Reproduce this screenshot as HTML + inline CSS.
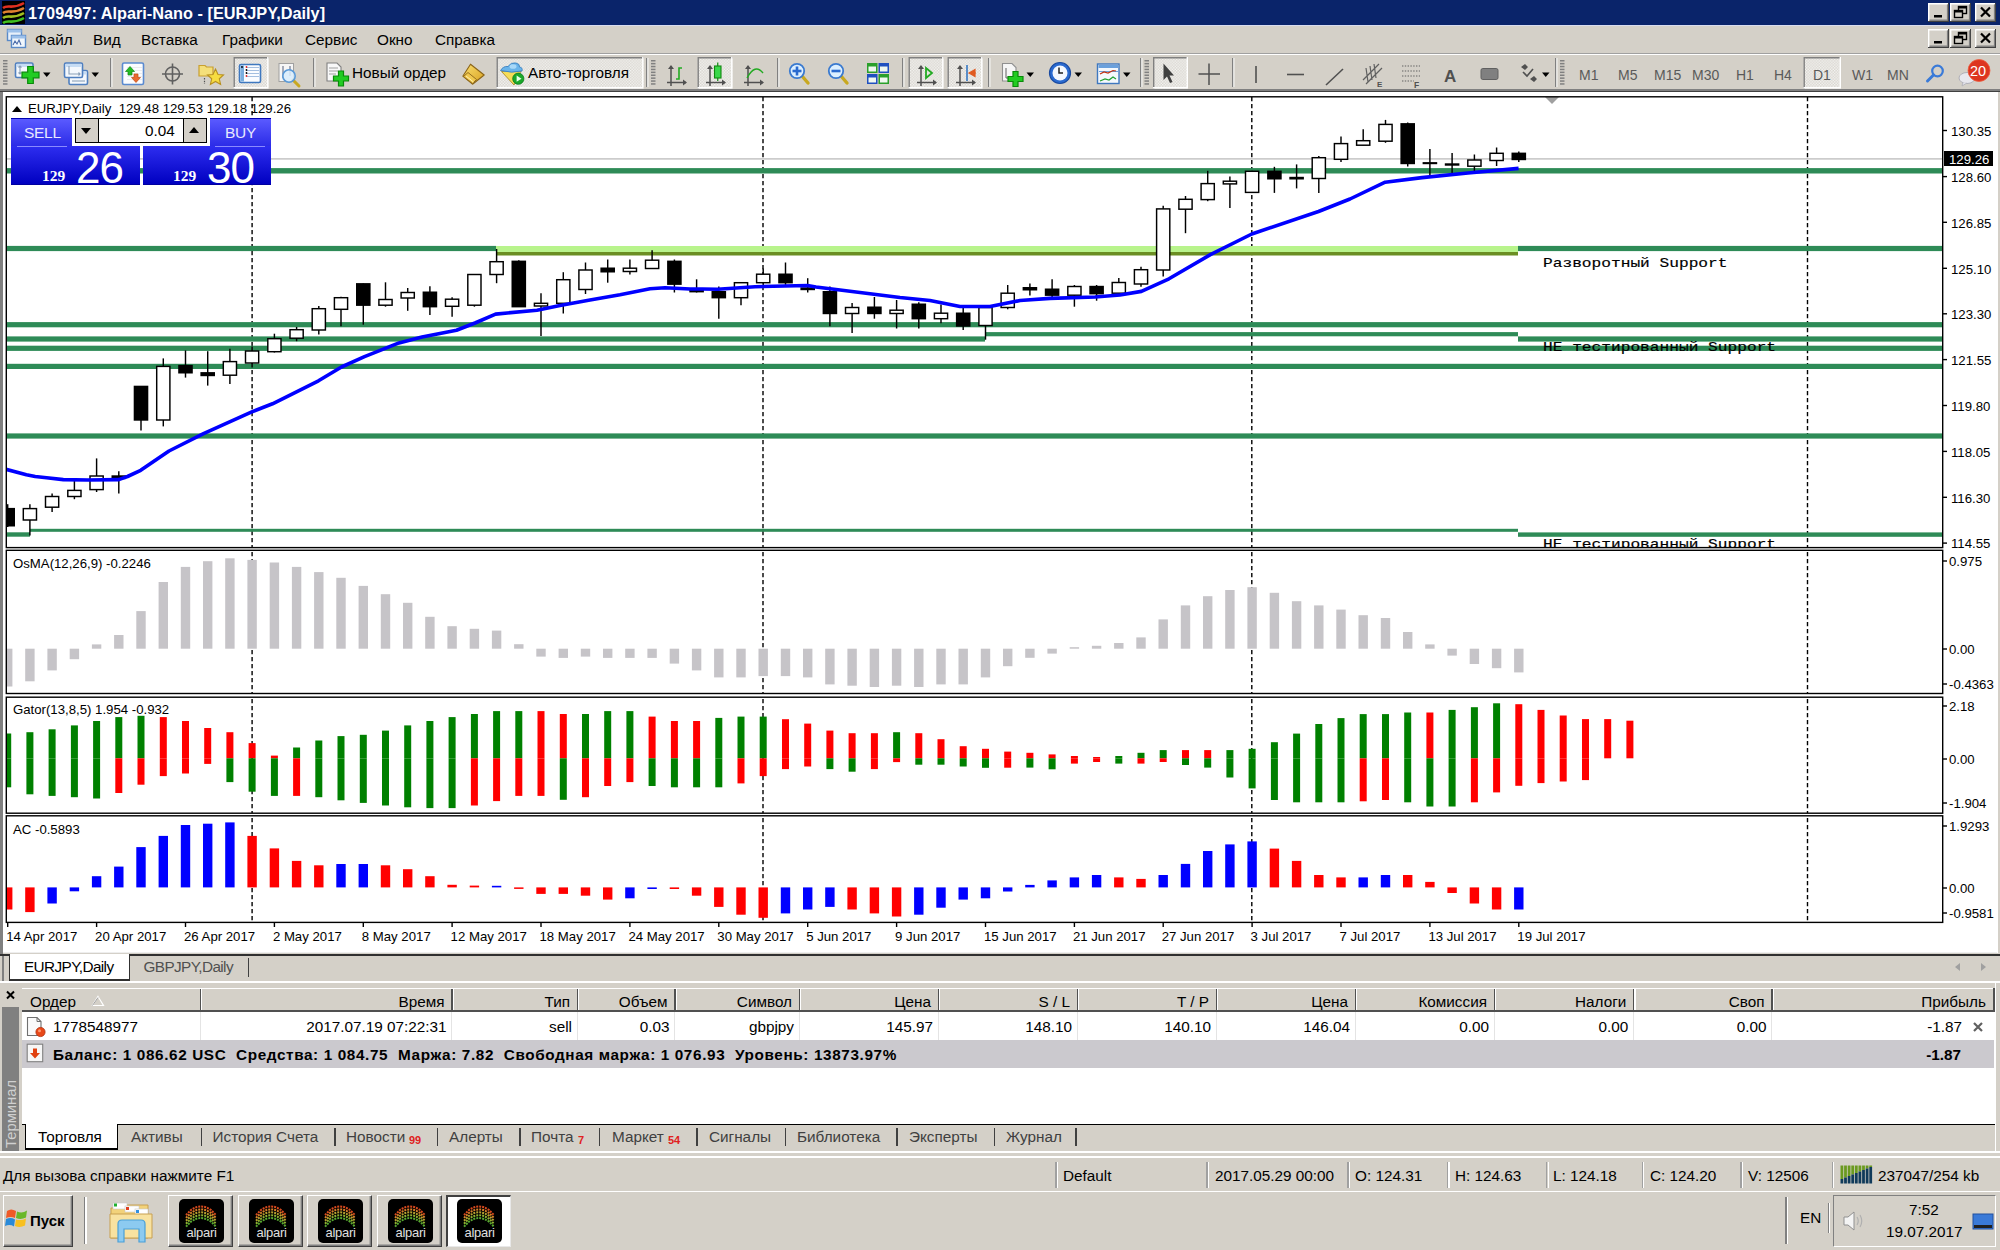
<!DOCTYPE html>
<html><head><meta charset="utf-8"><style>
*{box-sizing:border-box}
body{margin:0;width:2000px;height:1250px;overflow:hidden;background:#d4d0c8;font-family:"Liberation Sans", sans-serif;position:relative;color:#000}
.a{position:absolute}
.t{position:absolute;white-space:nowrap;font-size:15.3px;line-height:1}
svg text{font-family:"Liberation Sans", sans-serif}
svg text.mono{font-family:'Liberation Mono',monospace;font-size:16.2px;stroke:#000;stroke-width:0.2px}
</style></head><body>

<div class="a" style="left:0;top:0;width:2000px;height:25px;background:#0a246a"></div>
<svg class="a" style="left:2px;top:1px" width="23" height="23" viewBox="0 0 23 23">
<rect width="23" height="23" fill="#000"/>
<path d="M1 7 C6 3,10 9,22 2" stroke="#e03020" stroke-width="2.6" fill="none"/>
<path d="M1 12 C6 8,10 14,22 7" stroke="#e08030" stroke-width="2.6" fill="none"/>
<path d="M1 17 C6 13,10 19,22 12" stroke="#a0c020" stroke-width="2.6" fill="none"/>
<path d="M1 22 C6 18,10 24,22 17" stroke="#40c020" stroke-width="2.6" fill="none"/>
</svg>
<div class="t" style="left:28px;top:4.5px;color:#fff;font-weight:bold;font-size:16.3px">1709497: Alpari-Nano - [EURJPY,Daily]</div>
<svg class="a" style="left:1928px;top:3px" width="21" height="19" viewBox="0 0 21 19">
<rect x="0" y="0" width="21" height="19" fill="#d4d0c8"/>
<path d="M0 18.3 H20.3 V0" fill="none" stroke="#404040" stroke-width="1.4"/>
<path d="M0.7 18 V0.7 H20" fill="none" stroke="#fff" stroke-width="1.4"/>
<path d="M1.5 17 H19.5 V1.5" fill="none" stroke="#808080" stroke-width="1.2"/>
<rect x="6" y="12" width="8" height="2.5" fill="#000"/></svg><svg class="a" style="left:1950px;top:3px" width="21" height="19" viewBox="0 0 21 19">
<rect x="0" y="0" width="21" height="19" fill="#d4d0c8"/>
<path d="M0 18.3 H20.3 V0" fill="none" stroke="#404040" stroke-width="1.4"/>
<path d="M0.7 18 V0.7 H20" fill="none" stroke="#fff" stroke-width="1.4"/>
<path d="M1.5 17 H19.5 V1.5" fill="none" stroke="#808080" stroke-width="1.2"/>
<rect x="8.5" y="3.5" width="8" height="7" fill="none" stroke="#000" stroke-width="1.4"/><rect x="8.5" y="3.5" width="8" height="2" fill="#000"/><rect x="4.5" y="7.5" width="8" height="7" fill="#d4d0c8" stroke="#000" stroke-width="1.4"/><rect x="4.5" y="7.5" width="8" height="2" fill="#000"/></svg><svg class="a" style="left:1975px;top:3px" width="21" height="19" viewBox="0 0 21 19">
<rect x="0" y="0" width="21" height="19" fill="#d4d0c8"/>
<path d="M0 18.3 H20.3 V0" fill="none" stroke="#404040" stroke-width="1.4"/>
<path d="M0.7 18 V0.7 H20" fill="none" stroke="#fff" stroke-width="1.4"/>
<path d="M1.5 17 H19.5 V1.5" fill="none" stroke="#808080" stroke-width="1.2"/>
<path d="M6 4.5 L15 13.5 M15 4.5 L6 13.5" stroke="#000" stroke-width="2.2"/></svg>

<div class="a" style="left:0;top:25px;width:2000px;height:1.4px;background:#d8dcf0"></div>
<svg class="a" style="left:6px;top:28px" width="22" height="22" viewBox="0 0 22 22">
<rect x="1.5" y="1.5" width="14" height="11" fill="#e8f0fa" stroke="#5a8ac8" stroke-width="1.4"/>
<rect x="1.5" y="1.5" width="14" height="3" fill="#9cc0ea"/>
<rect x="5.5" y="7.5" width="14" height="12" fill="#f0f6fc" stroke="#5a8ac8" stroke-width="1.4"/>
<rect x="5.5" y="7.5" width="14" height="3" fill="#9cc0ea"/>
<path d="M7 17 L9 13 L11 16 L13 12 L15 17" stroke="#4a6aa8" stroke-width="1.1" fill="none"/>
</svg>
<div class="t" style="left:35px;top:31.5px;font-size:15.3px">Файл</div>
<div class="t" style="left:93px;top:31.5px;font-size:15.3px">Вид</div>
<div class="t" style="left:141px;top:31.5px;font-size:15.3px">Вставка</div>
<div class="t" style="left:222px;top:31.5px;font-size:15.3px">Графики</div>
<div class="t" style="left:305px;top:31.5px;font-size:15.3px">Сервис</div>
<div class="t" style="left:377px;top:31.5px;font-size:15.3px">Окно</div>
<div class="t" style="left:435px;top:31.5px;font-size:15.3px">Справка</div>
<svg class="a" style="left:1928px;top:29px" width="21" height="19" viewBox="0 0 21 19">
<rect x="0" y="0" width="21" height="19" fill="#d4d0c8"/>
<path d="M0 18.3 H20.3 V0" fill="none" stroke="#404040" stroke-width="1.4"/>
<path d="M0.7 18 V0.7 H20" fill="none" stroke="#fff" stroke-width="1.4"/>
<path d="M1.5 17 H19.5 V1.5" fill="none" stroke="#808080" stroke-width="1.2"/>
<rect x="6" y="12" width="8" height="2.5" fill="#000"/></svg><svg class="a" style="left:1950px;top:29px" width="21" height="19" viewBox="0 0 21 19">
<rect x="0" y="0" width="21" height="19" fill="#d4d0c8"/>
<path d="M0 18.3 H20.3 V0" fill="none" stroke="#404040" stroke-width="1.4"/>
<path d="M0.7 18 V0.7 H20" fill="none" stroke="#fff" stroke-width="1.4"/>
<path d="M1.5 17 H19.5 V1.5" fill="none" stroke="#808080" stroke-width="1.2"/>
<rect x="8.5" y="3.5" width="8" height="7" fill="none" stroke="#000" stroke-width="1.4"/><rect x="8.5" y="3.5" width="8" height="2" fill="#000"/><rect x="4.5" y="7.5" width="8" height="7" fill="#d4d0c8" stroke="#000" stroke-width="1.4"/><rect x="4.5" y="7.5" width="8" height="2" fill="#000"/></svg><svg class="a" style="left:1975px;top:29px" width="21" height="19" viewBox="0 0 21 19">
<rect x="0" y="0" width="21" height="19" fill="#d4d0c8"/>
<path d="M0 18.3 H20.3 V0" fill="none" stroke="#404040" stroke-width="1.4"/>
<path d="M0.7 18 V0.7 H20" fill="none" stroke="#fff" stroke-width="1.4"/>
<path d="M1.5 17 H19.5 V1.5" fill="none" stroke="#808080" stroke-width="1.2"/>
<path d="M6 4.5 L15 13.5 M15 4.5 L6 13.5" stroke="#000" stroke-width="2.2"/></svg><div class="a" style="left:0;top:52.5px;width:2000px;height:1.4px;background:#a0a0a0"></div><div class="a" style="left:0;top:53.9px;width:2000px;height:1.6px;background:#fff"></div>
<svg class="a" style="left:0;top:0" width="2000" height="92" viewBox="0 0 2000 92">
<defs><pattern id="chk" width="2.8" height="2.8" patternUnits="userSpaceOnUse"><rect width="2.8" height="2.8" fill="#d8d5ce"/><rect width="1.4" height="1.4" fill="#f4f4f2"/><rect x="1.4" y="1.4" width="1.4" height="1.4" fill="#f4f4f2"/></pattern></defs>
<rect x="3" y="60.0" width="4.5" height="1.5" fill="#808080"/><rect x="3" y="62.9" width="4.5" height="1.5" fill="#808080"/><rect x="3" y="65.8" width="4.5" height="1.5" fill="#808080"/><rect x="3" y="68.7" width="4.5" height="1.5" fill="#808080"/><rect x="3" y="71.6" width="4.5" height="1.5" fill="#808080"/><rect x="3" y="74.5" width="4.5" height="1.5" fill="#808080"/><rect x="3" y="77.4" width="4.5" height="1.5" fill="#808080"/><rect x="3" y="80.3" width="4.5" height="1.5" fill="#808080"/><rect x="3" y="83.2" width="4.5" height="1.5" fill="#808080"/>
<rect x="15.5" y="63" width="17.5" height="14.5" rx="1.5" fill="#f4f8fd" stroke="#4f7fbf" stroke-width="1.6"/><rect x="16.5" y="64" width="15.5" height="3" fill="#c6dcf4"/>
<path d="M20 66 V74 M18.5 67.5 L20 66 L21.5 67.5 M18.5 72.5 L20 74 L21.5 72.5" stroke="#8aa0b8" stroke-width="1.1" fill="none"/>
<path d="M27.7 66.5 H33.3 V72.2 H39.0 V77.8 H33.3 V83.5 H27.7 V77.8 H22.0 V72.2 H27.7 Z" fill="#22cc22" stroke="#0a8a0a" stroke-width="1.2"/>
<polygon points="43,72.5 50.5,72.5 46.75,77.0" fill="#000"/>
<rect x="69" y="70.5" width="18.5" height="14" rx="1.5" fill="#f4f8fd" stroke="#4f7fbf" stroke-width="1.6"/><rect x="70" y="71.5" width="16.5" height="3" fill="#c6dcf4"/>
<rect x="64.5" y="63" width="18" height="14.5" rx="1.5" fill="#f4f8fd" stroke="#4f7fbf" stroke-width="1.6"/><rect x="65.5" y="64" width="16" height="3" fill="#c6dcf4"/>
<path d="M69 66 V74 H80 M78.5 72.5 L80 74 L78.5 75.5" stroke="#8aa0b8" stroke-width="1.1" fill="none"/>
<path d="M72 81 H85" stroke="#8aa0b8" stroke-width="1.1"/>
<polygon points="91.5,72.5 99.0,72.5 95.25,77.0" fill="#000"/>
<rect x="110" y="58" width="1.4" height="29" fill="#808080"/><rect x="111.4" y="58" width="1" height="29" fill="#fff"/>
<rect x="122.5" y="63" width="21" height="21.5" rx="1.5" fill="#fbfcfe" stroke="#5a8ad0" stroke-width="1.6"/>
<path d="M127 67.5 H142 M127 70.5 H142 M127 73.5 H142 M127 76.5 H142 M127 79.5 H142" stroke="#e6e6ea" stroke-width="0.8"/>
<path d="M130 66.5 L125.5 71.5 H128 V75 H132 V71.5 H134.5 Z" fill="#22bb22" stroke="#118811" stroke-width="0.7"/>
<path d="M136 82.5 L131.5 77.5 H134 V74 H138 V77.5 H140.5 Z" fill="#e86a30" stroke="#c04a10" stroke-width="0.7"/>
<circle cx="172.5" cy="74" r="7" fill="none" stroke="#606060" stroke-width="1.6"/><path d="M172.5 63.5 V84.5 M162 74 H183" stroke="#606060" stroke-width="1.6"/>
<path d="M199 65.5 H205 L206.5 67 H213 V76 H199 Z" fill="#f4df7a" stroke="#c8a030" stroke-width="1.2"/>
<path d="M215.5 69 L218 74.5 L223.5 75 L219.3 78.8 L220.6 84.5 L215.5 81.5 L210.4 84.5 L211.7 78.8 L207.5 75 L213 74.5 Z" fill="#f6dc40" stroke="#b89020" stroke-width="1.1"/>
<path d="M204.5 78 V84" stroke="#505050" stroke-width="1.2" stroke-dasharray="1.4,1.4"/>
<rect x="233.5" y="57" width="35.0" height="31.5" fill="url(#chk)"/>
<path d="M234.2 88.5 V57.7 H268.5" stroke="#808080" stroke-width="1.4" fill="none"/>
<path d="M233.5 87.8 H267.8 V57" stroke="#fff" stroke-width="1.4" fill="none"/>
<rect x="239.5" y="64.5" width="21" height="18" rx="1.5" fill="#fafcff" stroke="#3f78bf" stroke-width="1.6"/><rect x="240.5" y="65.5" width="3.5" height="16" fill="#7aaede"/>
<path d="M247 67.5 H259 M247 70.5 H259 M247 73.5 H259 M247 76.5 H259" stroke="#9ab8dc" stroke-width="0.9"/>
<circle cx="246.5" cy="67" r="0.9" fill="#e02020"/><circle cx="246.5" cy="70" r="0.9" fill="#000"/><circle cx="246.5" cy="73" r="0.9" fill="#000"/><circle cx="246.5" cy="76" r="0.9" fill="#e02020"/><circle cx="242" cy="67" r="0.9" fill="#000"/>
<rect x="279" y="63.5" width="14.5" height="18" fill="#f6f6f6" stroke="#a0a0a0" stroke-width="1"/>
<path d="M283 66 V78 M290 66 V76" stroke="#707890" stroke-width="1.2"/>
<path d="M293 80 L299 86" stroke="#c8a820" stroke-width="3" stroke-linecap="round"/><circle cx="289" cy="76" r="6.2" fill="#d8ecfb" fill-opacity="0.85" stroke="#5a9ad8" stroke-width="1.6"/>
<rect x="313" y="58" width="1.4" height="29" fill="#808080"/><rect x="314.4" y="58" width="1" height="29" fill="#fff"/>
<path d="M327 63 H337 L341 67 V81 H327 Z" fill="#f8f8f8" stroke="#808080" stroke-width="1.1"/><path d="M329 68 H338 M329 71 H338 M329 74 H336" stroke="#a0a0a0" stroke-width="1"/>
<path d="M338.5 71.0 H343.5 V76.0 H348.5 V81.0 H343.5 V86.0 H338.5 V81.0 H333.5 V76.0 H338.5 Z" fill="#22cc22" stroke="#0a8a0a" stroke-width="1.2"/>
<defs><linearGradient id="gold" x1="0" y1="0" x2="1" y2="1"><stop offset="0" stop-color="#fbe070"/><stop offset="1" stop-color="#d8a020"/></linearGradient></defs>
<path d="M470.5 64.2 L484.2 75 L472.5 84.2 L462.8 76.2 Z" fill="url(#gold)" stroke="#8a6418" stroke-width="1.1" stroke-linejoin="round"/>
<path d="M463.5 76.5 L468 72.5 L476.5 79.5 L472.5 83.5 Z" fill="#f0c850" stroke="#8a6418" stroke-width="0.9"/><path d="M466 76 L473.5 82" stroke="#fff0b0" stroke-width="1"/>
<rect x="496.5" y="57" width="147.0" height="31.5" fill="url(#chk)"/>
<path d="M497.2 88.5 V57.7 H643.5" stroke="#808080" stroke-width="1.4" fill="none"/>
<path d="M496.5 87.8 H642.8 V57" stroke="#fff" stroke-width="1.4" fill="none"/>
<path d="M501.5 71.5 L521 71 L514 85 Z" fill="#f4dc58" stroke="#a88a28" stroke-width="0.9" stroke-linejoin="round"/>
<path d="M500.5 70.5 Q503 66 508 66.5 Q511 62 516 63 Q520 64 519.5 67 Q523 67.5 522 71 Q512 73.5 500.5 70.5 Z" fill="#6ab4ea" stroke="#3a80c0" stroke-width="0.9"/><ellipse cx="513" cy="66.5" rx="3.5" ry="2.3" fill="#a8d8f8"/>
<circle cx="518.3" cy="78.7" r="5.6" fill="#1aa82a" stroke="#0a7a1a" stroke-width="0.8"/><path d="M516.6 75.6 L521.5 78.7 L516.6 81.8 Z" fill="#e8ffe8"/>
<rect x="646" y="58" width="1.4" height="29" fill="#808080"/><rect x="647.4" y="58" width="1" height="29" fill="#fff"/>
<rect x="651" y="60.0" width="4.5" height="1.5" fill="#808080"/><rect x="651" y="62.9" width="4.5" height="1.5" fill="#808080"/><rect x="651" y="65.8" width="4.5" height="1.5" fill="#808080"/><rect x="651" y="68.7" width="4.5" height="1.5" fill="#808080"/><rect x="651" y="71.6" width="4.5" height="1.5" fill="#808080"/><rect x="651" y="74.5" width="4.5" height="1.5" fill="#808080"/><rect x="651" y="77.4" width="4.5" height="1.5" fill="#808080"/><rect x="651" y="80.3" width="4.5" height="1.5" fill="#808080"/><rect x="651" y="83.2" width="4.5" height="1.5" fill="#808080"/>
<path d="M671 86 V66" stroke="#505050" stroke-width="1.5"/>
<path d="M668 69 L671 65 L674 69" fill="#505050"/>
<path d="M667 82.5 H686" stroke="#505050" stroke-width="1.5"/>
<path d="M683 79.5 L687 82.5 L683 85.5" fill="#505050"/>
<path d="M676 79 H679 V68 H682" stroke="#22aa22" stroke-width="1.6" fill="none"/>
<rect x="697.5" y="57" width="35.0" height="31.5" fill="url(#chk)"/>
<path d="M698.2 88.5 V57.7 H732.5" stroke="#808080" stroke-width="1.4" fill="none"/>
<path d="M697.5 87.8 H731.8 V57" stroke="#fff" stroke-width="1.4" fill="none"/>
<path d="M710 86 V66" stroke="#505050" stroke-width="1.5"/>
<path d="M707 69 L710 65 L713 69" fill="#505050"/>
<path d="M706 82.5 H725" stroke="#505050" stroke-width="1.5"/>
<path d="M722 79.5 L726 82.5 L722 85.5" fill="#505050"/>
<rect x="714.5" y="66" width="6.5" height="12" fill="#3ad84a" stroke="#118811" stroke-width="1.1"/><path d="M717.75 62.5 V66 M717.75 78 V81" stroke="#118811" stroke-width="1.2"/>
<path d="M748 86 V66" stroke="#505050" stroke-width="1.5"/>
<path d="M745 69 L748 65 L751 69" fill="#505050"/>
<path d="M744 82.5 H763" stroke="#505050" stroke-width="1.5"/>
<path d="M760 79.5 L764 82.5 L760 85.5" fill="#505050"/>
<path d="M747 78 Q755 63 763 73" stroke="#22aa22" stroke-width="1.4" fill="none"/>
<rect x="777" y="58" width="1.4" height="29" fill="#808080"/><rect x="778.4" y="58" width="1" height="29" fill="#fff"/>
<path d="M802 76 L808 83" stroke="#c8a820" stroke-width="3.4" stroke-linecap="round"/>
<circle cx="797" cy="71" r="7.2" fill="#dcefff" stroke="#3a7ad0" stroke-width="1.8"/><rect x="792.5" y="69.7" width="9" height="2.6" fill="#2a6acf"/><rect x="795.7" y="66.5" width="2.6" height="9" fill="#2a6acf"/>
<path d="M841 76 L847 83" stroke="#c8a820" stroke-width="3.4" stroke-linecap="round"/>
<circle cx="836" cy="71" r="7.2" fill="#dcefff" stroke="#3a7ad0" stroke-width="1.8"/><rect x="831.5" y="69.7" width="9" height="2.6" fill="#2a6acf"/>
<rect x="867" y="63" width="10.5" height="10" fill="#2aa02a"/><rect x="868.5" y="66.5" width="7.5" height="5" fill="#f0f8f0"/>
<rect x="878.5" y="63" width="10.5" height="10" fill="#2050c0"/><rect x="880.0" y="66.5" width="7.5" height="5" fill="#f0f8f0"/>
<rect x="867" y="74" width="10.5" height="10" fill="#2050c0"/><rect x="868.5" y="77.5" width="7.5" height="5" fill="#f0f8f0"/>
<rect x="878.5" y="74" width="10.5" height="10" fill="#2aa02a"/><rect x="880.0" y="77.5" width="7.5" height="5" fill="#f0f8f0"/>
<rect x="902" y="58" width="1.4" height="29" fill="#808080"/><rect x="903.4" y="58" width="1" height="29" fill="#fff"/>
<rect x="908.5" y="57" width="35.0" height="31.5" fill="url(#chk)"/>
<path d="M909.2 88.5 V57.7 H943.5" stroke="#808080" stroke-width="1.4" fill="none"/>
<path d="M908.5 87.8 H942.8 V57" stroke="#fff" stroke-width="1.4" fill="none"/>
<path d="M921 86 V66" stroke="#505050" stroke-width="1.5"/>
<path d="M918 69 L921 65 L924 69" fill="#505050"/>
<path d="M917 82.5 H936" stroke="#505050" stroke-width="1.5"/>
<path d="M933 79.5 L937 82.5 L933 85.5" fill="#505050"/>
<path d="M926 68 L932 73 L926 78 Z" fill="none" stroke="#22aa22" stroke-width="1.8"/>
<rect x="947.5" y="57" width="35.0" height="31.5" fill="url(#chk)"/>
<path d="M948.2 88.5 V57.7 H982.5" stroke="#808080" stroke-width="1.4" fill="none"/>
<path d="M947.5 87.8 H981.8 V57" stroke="#fff" stroke-width="1.4" fill="none"/>
<path d="M960 86 V66" stroke="#505050" stroke-width="1.5"/>
<path d="M957 69 L960 65 L963 69" fill="#505050"/>
<path d="M956 82.5 H975" stroke="#505050" stroke-width="1.5"/>
<path d="M972 79.5 L976 82.5 L972 85.5" fill="#505050"/>
<path d="M967 65 V81" stroke="#2a70c0" stroke-width="1.5"/><path d="M969 73 L975 69.5 V76.5 Z M973 73 H976" fill="#e05a20" stroke="#e05a20" stroke-width="1.2"/>
<rect x="988" y="58" width="1.4" height="29" fill="#808080"/><rect x="989.4" y="58" width="1" height="29" fill="#fff"/>
<path d="M1002.5 63.5 H1012 L1016 67.5 V81 H1002.5 Z" fill="#f6f6f6" stroke="#909090" stroke-width="1.1"/><path d="M1006 68 V78 H1012" stroke="#606060" stroke-width="1" fill="none"/>
<path d="M1013.0 71.5 H1018.0 V76.5 H1023.0 V81.5 H1018.0 V86.5 H1013.0 V81.5 H1008.0 V76.5 H1013.0 Z" fill="#22cc22" stroke="#0a8a0a" stroke-width="1.2"/>
<polygon points="1026.5,72.5 1034.0,72.5 1030.25,77.0" fill="#000"/>
<circle cx="1060" cy="73" r="10.5" fill="#2a6ad0" stroke="#1a4aa0" stroke-width="1.2"/><circle cx="1060" cy="73" r="7.5" fill="#f4f8ff"/><path d="M1059 67.5 V73 H1063" stroke="#202020" stroke-width="1.5" fill="none"/>
<polygon points="1074.5,72.5 1082.0,72.5 1078.25,77.0" fill="#000"/>
<rect x="1097.5" y="64" width="21.5" height="19.5" fill="#f4f8fd" stroke="#3f78bf" stroke-width="1.4"/><rect x="1098.5" y="65" width="19.5" height="3" fill="#6aa0dc"/><path d="M1099 71.5 H1118" stroke="#6aa0dc" stroke-width="1"/><path d="M1100 74 L1104 72 L1108 73 L1113 70.5 L1116 71" stroke="#c03010" stroke-width="1.2" fill="none"/><path d="M1100 81 L1105 79 L1109 80 L1113 77 L1116 79" stroke="#20a030" stroke-width="1.2" fill="none"/>
<polygon points="1123,72.5 1130.5,72.5 1126.75,77.0" fill="#000"/>
<rect x="1140" y="58" width="1.4" height="29" fill="#808080"/><rect x="1141.4" y="58" width="1" height="29" fill="#fff"/>
<rect x="1144.5" y="60.0" width="4.5" height="1.5" fill="#808080"/><rect x="1144.5" y="62.9" width="4.5" height="1.5" fill="#808080"/><rect x="1144.5" y="65.8" width="4.5" height="1.5" fill="#808080"/><rect x="1144.5" y="68.7" width="4.5" height="1.5" fill="#808080"/><rect x="1144.5" y="71.6" width="4.5" height="1.5" fill="#808080"/><rect x="1144.5" y="74.5" width="4.5" height="1.5" fill="#808080"/><rect x="1144.5" y="77.4" width="4.5" height="1.5" fill="#808080"/><rect x="1144.5" y="80.3" width="4.5" height="1.5" fill="#808080"/><rect x="1144.5" y="83.2" width="4.5" height="1.5" fill="#808080"/>
<rect x="1153" y="57" width="35" height="31.5" fill="url(#chk)"/>
<path d="M1153.7 88.5 V57.7 H1188" stroke="#808080" stroke-width="1.4" fill="none"/>
<path d="M1153 87.8 H1187.3 V57" stroke="#fff" stroke-width="1.4" fill="none"/>
<path d="M1163.5 63.5 V80 L1167 76.5 L1170 83 L1172.5 82 L1169.5 75.5 L1174 75.5 Z" fill="#404040"/>
<path d="M1209 63.5 V85 M1198.5 74 H1220" stroke="#505050" stroke-width="1.5"/>
<rect x="1232" y="58" width="1.4" height="29" fill="#808080"/><rect x="1233.4" y="58" width="1" height="29" fill="#fff"/>
<path d="M1256 66 V83" stroke="#505050" stroke-width="1.6"/>
<path d="M1287 74.5 H1304" stroke="#505050" stroke-width="1.6"/>
<path d="M1326 85 L1343 69" stroke="#505050" stroke-width="1.6"/>
<path d="M1363 80 L1379 64 M1366 84 L1382 68 M1366 68 L1368 82 M1370 66 L1372 80 M1374 64 L1376 78" stroke="#606060" stroke-width="1.2" fill="none"/><text x="1377" y="87" style="font-size:8px;font-weight:bold;font-family:'Liberation Sans'" fill="#505050">E</text>
<path d="M1402 66 H1420 M1402 71 H1420 M1402 76 H1420 M1402 81 H1414" stroke="#606060" stroke-width="1.2" stroke-dasharray="1.4,1.4"/><text x="1414" y="88" style="font-size:8.5px;font-weight:bold;font-family:'Liberation Sans'" fill="#505050">F</text>
<text x="1444" y="82" style="font-size:17px;font-weight:bold;font-family:'Liberation Sans'" fill="#505050">A</text>
<rect x="1481" y="68.5" width="17" height="11" rx="1.8" fill="#808080" stroke="#606060" stroke-width="1"/>
<path d="M1521 67 L1525 64 L1528 67 L1525 70 Z M1530 79 L1534 76 L1537 79 L1534 82 Z" fill="#505050"/><path d="M1523 72 L1527 76 L1533 69" stroke="#505050" stroke-width="1.6" fill="none"/>
<polygon points="1542,72.5 1549.5,72.5 1545.75,77.0" fill="#000"/>
<rect x="1555" y="58" width="1.4" height="29" fill="#808080"/><rect x="1556.4" y="58" width="1" height="29" fill="#fff"/>
<rect x="1560" y="60.0" width="4.5" height="1.5" fill="#808080"/><rect x="1560" y="62.9" width="4.5" height="1.5" fill="#808080"/><rect x="1560" y="65.8" width="4.5" height="1.5" fill="#808080"/><rect x="1560" y="68.7" width="4.5" height="1.5" fill="#808080"/><rect x="1560" y="71.6" width="4.5" height="1.5" fill="#808080"/><rect x="1560" y="74.5" width="4.5" height="1.5" fill="#808080"/><rect x="1560" y="77.4" width="4.5" height="1.5" fill="#808080"/><rect x="1560" y="80.3" width="4.5" height="1.5" fill="#808080"/><rect x="1560" y="83.2" width="4.5" height="1.5" fill="#808080"/>
<rect x="1803.5" y="57" width="37.5" height="31.5" fill="url(#chk)"/>
<path d="M1804.2 88.5 V57.7 H1841" stroke="#808080" stroke-width="1.4" fill="none"/>
<path d="M1803.5 87.8 H1840.3 V57" stroke="#fff" stroke-width="1.4" fill="none"/>
<text x="1579" y="79.5" style="font-size:14px;font-family:'Liberation Sans'" fill="#5a5a5a">M1</text>
<text x="1618" y="79.5" style="font-size:14px;font-family:'Liberation Sans'" fill="#5a5a5a">M5</text>
<text x="1654" y="79.5" style="font-size:14px;font-family:'Liberation Sans'" fill="#5a5a5a">M15</text>
<text x="1692" y="79.5" style="font-size:14px;font-family:'Liberation Sans'" fill="#5a5a5a">M30</text>
<text x="1736" y="79.5" style="font-size:14px;font-family:'Liberation Sans'" fill="#5a5a5a">H1</text>
<text x="1774" y="79.5" style="font-size:14px;font-family:'Liberation Sans'" fill="#5a5a5a">H4</text>
<text x="1813" y="79.5" style="font-size:14px;font-family:'Liberation Sans'" fill="#5a5a5a">D1</text>
<text x="1852" y="79.5" style="font-size:14px;font-family:'Liberation Sans'" fill="#5a5a5a">W1</text>
<text x="1887" y="79.5" style="font-size:14px;font-family:'Liberation Sans'" fill="#5a5a5a">MN</text>
<circle cx="1937.5" cy="71" r="5.3" fill="none" stroke="#3a7ad8" stroke-width="2.2"/><path d="M1933.5 75 L1927.5 81" stroke="#3a7ad8" stroke-width="3" stroke-linecap="round"/>
<ellipse cx="1967" cy="78" rx="8" ry="5.5" fill="#e8e8ee" stroke="#b0b0b8" stroke-width="1"/><path d="M1963 82 L1962 86 L1967 83" fill="#e0e0e8" stroke="#b0b0b8" stroke-width="0.8"/>
<circle cx="1979" cy="70.5" r="11" fill="#dd3520"/><circle cx="1979" cy="70.5" r="11" fill="none" stroke="#f06040" stroke-width="0.8"/><text x="1970" y="76" style="font-size:14.5px;font-family:'Liberation Sans'" fill="#fff">20</text>
</svg>
<div class="t" style="left:352px;top:64.5px;font-size:15.3px">Новый ордер</div>
<div class="t" style="left:528px;top:64.5px;font-size:15.3px">Авто-торговля</div>
<div class="a" style="left:0;top:89px;width:2000px;height:1.5px;background:#808080"></div>
<div class="a" style="left:0;top:90.5px;width:2000px;height:1.5px;background:#404040"></div>
<!-- chart window -->
<div class="a" style="left:0;top:92px;width:2.5px;height:862px;background:#808080"></div>
<div class="a" style="left:2.5px;top:92px;width:1995px;height:861px;background:#fff"></div>
<div class="a" style="left:1997.5px;top:92px;width:2.5px;height:862px;background:#d4d0c8"></div>
<svg class="a" style="left:0;top:0" width="2000" height="1250" viewBox="0 0 2000 1250">
<defs><clipPath id="cm"><rect x="6" y="97" width="1937" height="450"/></clipPath>
<clipPath id="co"><rect x="6" y="550" width="1937" height="143"/></clipPath>
<clipPath id="cg"><rect x="6" y="697" width="1937" height="116"/></clipPath>
<clipPath id="ca"><rect x="6" y="816" width="1937" height="106"/></clipPath></defs>
<g clip-path="url(#cm)"><line x1="252.1" y1="97" x2="252.1" y2="922" stroke="#000" stroke-width="1.4" stroke-dasharray="4.2,2.8"/>
<line x1="763.0" y1="97" x2="763.0" y2="922" stroke="#000" stroke-width="1.4" stroke-dasharray="4.2,2.8"/>
<line x1="1251.8" y1="97" x2="1251.8" y2="922" stroke="#000" stroke-width="1.4" stroke-dasharray="4.2,2.8"/>
<line x1="1807.5" y1="97" x2="1807.5" y2="922" stroke="#000" stroke-width="1.4" stroke-dasharray="4.2,2.8"/>
<rect x="6" y="158.2" width="1937" height="1.4" fill="#c0c0c0"/>
<rect x="6" y="168.1" width="1936" height="5.4" fill="#2e8b57"/>
<rect x="6" y="245.9" width="490" height="5.2" fill="#2e8b57"/>
<rect x="496" y="246" width="1022" height="6" fill="#b8f48c"/>
<rect x="496" y="252" width="1022" height="3.5" fill="#6b8e23"/>
<rect x="1518" y="245.9" width="424" height="5.2" fill="#2e8b57"/>
<rect x="6" y="322.1" width="1936" height="5.2" fill="#2e8b57"/>
<rect x="6" y="336.4" width="979" height="5.2" fill="#2e8b57"/>
<rect x="985" y="332.1" width="533" height="4.2" fill="#2e8b57"/>
<rect x="1518" y="336.4" width="424" height="5.2" fill="#2e8b57"/>
<rect x="6" y="345.7" width="1936" height="5.2" fill="#2e8b57"/>
<rect x="6" y="363.8" width="1936" height="5.2" fill="#2e8b57"/>
<rect x="6" y="433.4" width="1936" height="5.2" fill="#2e8b57"/>
<rect x="6" y="532.3" width="24" height="4.4" fill="#2e8b57"/>
<rect x="30" y="528.8" width="1488" height="3.0" fill="#2e8b57"/>
<rect x="1518" y="532.4" width="424" height="4.4" fill="#2e8b57"/>
<text transform="translate(1543,266.5) scale(1,0.82)" class="mono" fill="#000">Разворотный Support</text>
<text transform="translate(1543,351) scale(1,0.82)" class="mono" fill="#000">НЕ тестированный Support</text>
<text transform="translate(1543,547.5) scale(1,0.82)" class="mono" fill="#000">НЕ тестированный Support</text>
<line x1="7.7" y1="504.2" x2="7.7" y2="527.0" stroke="#000" stroke-width="1.45"/>
<rect x="0.4" y="507.9" width="14.6" height="18.6" fill="#000"/>
<line x1="29.9" y1="504.2" x2="29.9" y2="535.4" stroke="#000" stroke-width="1.45"/>
<rect x="23.3" y="508.6" width="13.2" height="11.4" fill="#fff" stroke="#000" stroke-width="1.45"/>
<line x1="52.1" y1="493.6" x2="52.1" y2="512.0" stroke="#000" stroke-width="1.45"/>
<rect x="45.5" y="496.5" width="13.2" height="10.7" fill="#fff" stroke="#000" stroke-width="1.45"/>
<line x1="74.4" y1="480.8" x2="74.4" y2="499.2" stroke="#000" stroke-width="1.45"/>
<rect x="67.8" y="490.4" width="13.2" height="6.1" fill="#fff" stroke="#000" stroke-width="1.45"/>
<line x1="96.6" y1="458.4" x2="96.6" y2="492.0" stroke="#000" stroke-width="1.45"/>
<rect x="90.0" y="476.0" width="13.2" height="13.6" fill="#fff" stroke="#000" stroke-width="1.45"/>
<line x1="118.8" y1="471.2" x2="118.8" y2="493.6" stroke="#000" stroke-width="1.45"/>
<rect x="111.5" y="475.3" width="14.6" height="3.8" fill="#000"/>
<line x1="141.0" y1="386.0" x2="141.0" y2="430.4" stroke="#000" stroke-width="1.45"/>
<rect x="133.7" y="385.7" width="14.6" height="35.0" fill="#000"/>
<line x1="163.3" y1="358.4" x2="163.3" y2="426.4" stroke="#000" stroke-width="1.45"/>
<rect x="156.7" y="366.4" width="13.2" height="53.6" fill="#fff" stroke="#000" stroke-width="1.45"/>
<line x1="185.5" y1="350.4" x2="185.5" y2="377.6" stroke="#000" stroke-width="1.45"/>
<rect x="178.2" y="364.9" width="14.6" height="8.6" fill="#000"/>
<line x1="207.7" y1="351.2" x2="207.7" y2="385.6" stroke="#000" stroke-width="1.45"/>
<rect x="200.4" y="372.1" width="14.6" height="4.1" fill="#000"/>
<line x1="229.9" y1="348.8" x2="229.9" y2="384.0" stroke="#000" stroke-width="1.45"/>
<rect x="223.3" y="361.6" width="13.2" height="13.6" fill="#fff" stroke="#000" stroke-width="1.45"/>
<line x1="252.1" y1="346.5" x2="252.1" y2="367.5" stroke="#000" stroke-width="1.45"/>
<rect x="245.5" y="351.0" width="13.2" height="12.0" fill="#fff" stroke="#000" stroke-width="1.45"/>
<line x1="274.4" y1="333.7" x2="274.4" y2="352.5" stroke="#000" stroke-width="1.45"/>
<rect x="267.8" y="338.7" width="13.2" height="13.0" fill="#fff" stroke="#000" stroke-width="1.45"/>
<line x1="296.6" y1="327.0" x2="296.6" y2="341.2" stroke="#000" stroke-width="1.45"/>
<rect x="290.0" y="329.7" width="13.2" height="8.5" fill="#fff" stroke="#000" stroke-width="1.45"/>
<line x1="318.8" y1="306.0" x2="318.8" y2="334.5" stroke="#000" stroke-width="1.45"/>
<rect x="312.2" y="308.7" width="13.2" height="21.3" fill="#fff" stroke="#000" stroke-width="1.45"/>
<line x1="341.0" y1="296.7" x2="341.0" y2="326.2" stroke="#000" stroke-width="1.45"/>
<rect x="334.4" y="297.7" width="13.2" height="11.6" fill="#fff" stroke="#000" stroke-width="1.45"/>
<line x1="363.3" y1="283.5" x2="363.3" y2="324.7" stroke="#000" stroke-width="1.45"/>
<rect x="356.0" y="283.1" width="14.6" height="22.8" fill="#000"/>
<line x1="385.5" y1="282.3" x2="385.5" y2="306.7" stroke="#000" stroke-width="1.45"/>
<rect x="378.9" y="299.5" width="13.2" height="5.7" fill="#fff" stroke="#000" stroke-width="1.45"/>
<line x1="407.7" y1="288.0" x2="407.7" y2="310.8" stroke="#000" stroke-width="1.45"/>
<rect x="401.1" y="292.5" width="13.2" height="5.5" fill="#fff" stroke="#000" stroke-width="1.45"/>
<line x1="429.9" y1="286.2" x2="429.9" y2="315.0" stroke="#000" stroke-width="1.45"/>
<rect x="422.6" y="291.5" width="14.6" height="15.9" fill="#000"/>
<line x1="452.1" y1="297.3" x2="452.1" y2="316.8" stroke="#000" stroke-width="1.45"/>
<rect x="445.5" y="299.2" width="13.2" height="7.1" fill="#fff" stroke="#000" stroke-width="1.45"/>
<line x1="474.4" y1="274.5" x2="474.4" y2="306.7" stroke="#000" stroke-width="1.45"/>
<rect x="467.8" y="274.5" width="13.2" height="30.7" fill="#fff" stroke="#000" stroke-width="1.45"/>
<line x1="496.6" y1="249.0" x2="496.6" y2="283.2" stroke="#000" stroke-width="1.45"/>
<rect x="490.0" y="261.7" width="13.2" height="12.8" fill="#fff" stroke="#000" stroke-width="1.45"/>
<line x1="518.8" y1="260.2" x2="518.8" y2="306.7" stroke="#000" stroke-width="1.45"/>
<rect x="511.5" y="260.6" width="14.6" height="46.8" fill="#000"/>
<line x1="541.0" y1="293.2" x2="541.0" y2="336.0" stroke="#000" stroke-width="1.45"/>
<rect x="534.4" y="303.3" width="13.2" height="2.7" fill="#fff" stroke="#000" stroke-width="1.45"/>
<line x1="563.3" y1="272.2" x2="563.3" y2="313.5" stroke="#000" stroke-width="1.45"/>
<rect x="556.7" y="279.7" width="13.2" height="23.6" fill="#fff" stroke="#000" stroke-width="1.45"/>
<line x1="585.5" y1="262.5" x2="585.5" y2="294.0" stroke="#000" stroke-width="1.45"/>
<rect x="578.9" y="270.0" width="13.2" height="19.5" fill="#fff" stroke="#000" stroke-width="1.45"/>
<line x1="607.7" y1="259.5" x2="607.7" y2="282.7" stroke="#000" stroke-width="1.45"/>
<rect x="600.4" y="267.5" width="14.6" height="5.0" fill="#000"/>
<line x1="629.9" y1="259.5" x2="629.9" y2="274.5" stroke="#000" stroke-width="1.45"/>
<rect x="623.3" y="268.2" width="13.2" height="3.3" fill="#fff" stroke="#000" stroke-width="1.45"/>
<line x1="652.1" y1="250.2" x2="652.1" y2="268.5" stroke="#000" stroke-width="1.45"/>
<rect x="645.5" y="260.2" width="13.2" height="8.3" fill="#fff" stroke="#000" stroke-width="1.45"/>
<line x1="674.4" y1="259.5" x2="674.4" y2="292.5" stroke="#000" stroke-width="1.45"/>
<rect x="667.1" y="260.6" width="14.6" height="24.3" fill="#000"/>
<line x1="696.6" y1="279.3" x2="696.6" y2="292.5" stroke="#000" stroke-width="1.45"/>
<rect x="689.3" y="289.5" width="14.6" height="2.9" fill="#000"/>
<line x1="718.8" y1="286.5" x2="718.8" y2="318.7" stroke="#000" stroke-width="1.45"/>
<rect x="711.5" y="291.0" width="14.6" height="7.4" fill="#000"/>
<line x1="741.0" y1="282.7" x2="741.0" y2="305.2" stroke="#000" stroke-width="1.45"/>
<rect x="734.4" y="282.7" width="13.2" height="15.0" fill="#fff" stroke="#000" stroke-width="1.45"/>
<line x1="763.2" y1="268.5" x2="763.2" y2="285.0" stroke="#000" stroke-width="1.45"/>
<rect x="756.6" y="274.2" width="13.2" height="8.5" fill="#fff" stroke="#000" stroke-width="1.45"/>
<line x1="785.5" y1="262.5" x2="785.5" y2="285.0" stroke="#000" stroke-width="1.45"/>
<rect x="778.2" y="273.5" width="14.6" height="9.9" fill="#000"/>
<line x1="807.7" y1="278.2" x2="807.7" y2="292.5" stroke="#000" stroke-width="1.45"/>
<rect x="800.4" y="287.3" width="14.6" height="2.9" fill="#000"/>
<line x1="829.9" y1="286.5" x2="829.9" y2="326.2" stroke="#000" stroke-width="1.45"/>
<rect x="822.6" y="291.0" width="14.6" height="23.2" fill="#000"/>
<line x1="852.1" y1="303.0" x2="852.1" y2="333.0" stroke="#000" stroke-width="1.45"/>
<rect x="845.5" y="307.5" width="13.2" height="6.0" fill="#fff" stroke="#000" stroke-width="1.45"/>
<line x1="874.4" y1="297.0" x2="874.4" y2="318.7" stroke="#000" stroke-width="1.45"/>
<rect x="867.1" y="306.5" width="14.6" height="7.7" fill="#000"/>
<line x1="896.6" y1="300.0" x2="896.6" y2="328.5" stroke="#000" stroke-width="1.45"/>
<rect x="890.0" y="310.2" width="13.2" height="3.3" fill="#fff" stroke="#000" stroke-width="1.45"/>
<line x1="918.8" y1="302.2" x2="918.8" y2="328.5" stroke="#000" stroke-width="1.45"/>
<rect x="911.5" y="303.5" width="14.6" height="15.9" fill="#000"/>
<line x1="941.0" y1="304.5" x2="941.0" y2="323.2" stroke="#000" stroke-width="1.45"/>
<rect x="934.4" y="313.2" width="13.2" height="5.5" fill="#fff" stroke="#000" stroke-width="1.45"/>
<line x1="963.2" y1="307.5" x2="963.2" y2="330.0" stroke="#000" stroke-width="1.45"/>
<rect x="955.9" y="312.5" width="14.6" height="14.2" fill="#000"/>
<line x1="985.5" y1="307.5" x2="985.5" y2="339.7" stroke="#000" stroke-width="1.45"/>
<rect x="978.9" y="307.5" width="13.2" height="18.0" fill="#fff" stroke="#000" stroke-width="1.45"/>
<line x1="1007.7" y1="285.0" x2="1007.7" y2="309.3" stroke="#000" stroke-width="1.45"/>
<rect x="1001.1" y="293.2" width="13.2" height="14.3" fill="#fff" stroke="#000" stroke-width="1.45"/>
<line x1="1029.9" y1="283.5" x2="1029.9" y2="295.5" stroke="#000" stroke-width="1.45"/>
<rect x="1022.6" y="287.0" width="14.6" height="3.5" fill="#000"/>
<line x1="1052.1" y1="279.3" x2="1052.1" y2="297.7" stroke="#000" stroke-width="1.45"/>
<rect x="1044.8" y="288.5" width="14.6" height="7.4" fill="#000"/>
<line x1="1074.4" y1="285.0" x2="1074.4" y2="306.7" stroke="#000" stroke-width="1.45"/>
<rect x="1067.8" y="286.5" width="13.2" height="8.7" fill="#fff" stroke="#000" stroke-width="1.45"/>
<line x1="1096.6" y1="285.0" x2="1096.6" y2="300.7" stroke="#000" stroke-width="1.45"/>
<rect x="1089.3" y="285.8" width="14.6" height="8.6" fill="#000"/>
<line x1="1118.8" y1="278.0" x2="1118.8" y2="293.2" stroke="#000" stroke-width="1.45"/>
<rect x="1112.2" y="282.5" width="13.2" height="10.7" fill="#fff" stroke="#000" stroke-width="1.45"/>
<line x1="1141.0" y1="266.8" x2="1141.0" y2="286.8" stroke="#000" stroke-width="1.45"/>
<rect x="1134.4" y="269.7" width="13.2" height="14.3" fill="#fff" stroke="#000" stroke-width="1.45"/>
<line x1="1163.2" y1="205.7" x2="1163.2" y2="276.4" stroke="#000" stroke-width="1.45"/>
<rect x="1156.6" y="208.9" width="13.2" height="61.1" fill="#fff" stroke="#000" stroke-width="1.45"/>
<line x1="1185.5" y1="196.0" x2="1185.5" y2="233.2" stroke="#000" stroke-width="1.45"/>
<rect x="1178.9" y="199.3" width="13.2" height="9.9" fill="#fff" stroke="#000" stroke-width="1.45"/>
<line x1="1207.7" y1="170.8" x2="1207.7" y2="201.2" stroke="#000" stroke-width="1.45"/>
<rect x="1201.1" y="183.6" width="13.2" height="16.0" fill="#fff" stroke="#000" stroke-width="1.45"/>
<line x1="1229.9" y1="176.4" x2="1229.9" y2="207.9" stroke="#000" stroke-width="1.45"/>
<rect x="1223.3" y="181.2" width="13.2" height="2.7" fill="#fff" stroke="#000" stroke-width="1.45"/>
<line x1="1252.1" y1="170.8" x2="1252.1" y2="192.4" stroke="#000" stroke-width="1.45"/>
<rect x="1245.5" y="171.3" width="13.2" height="21.1" fill="#fff" stroke="#000" stroke-width="1.45"/>
<line x1="1274.4" y1="166.8" x2="1274.4" y2="192.9" stroke="#000" stroke-width="1.45"/>
<rect x="1267.1" y="170.6" width="14.6" height="8.9" fill="#000"/>
<line x1="1296.6" y1="164.4" x2="1296.6" y2="188.4" stroke="#000" stroke-width="1.45"/>
<rect x="1289.3" y="176.8" width="14.6" height="2.7" fill="#000"/>
<line x1="1318.8" y1="156.0" x2="1318.8" y2="192.9" stroke="#000" stroke-width="1.45"/>
<rect x="1312.2" y="157.7" width="13.2" height="20.8" fill="#fff" stroke="#000" stroke-width="1.45"/>
<line x1="1341.0" y1="136.4" x2="1341.0" y2="162.0" stroke="#000" stroke-width="1.45"/>
<rect x="1334.4" y="143.6" width="13.2" height="15.7" fill="#fff" stroke="#000" stroke-width="1.45"/>
<line x1="1363.2" y1="129.2" x2="1363.2" y2="145.2" stroke="#000" stroke-width="1.45"/>
<rect x="1356.6" y="140.7" width="13.2" height="4.5" fill="#fff" stroke="#000" stroke-width="1.45"/>
<line x1="1385.5" y1="119.9" x2="1385.5" y2="142.8" stroke="#000" stroke-width="1.45"/>
<rect x="1378.9" y="124.4" width="13.2" height="16.8" fill="#fff" stroke="#000" stroke-width="1.45"/>
<line x1="1407.7" y1="122.5" x2="1407.7" y2="166.5" stroke="#000" stroke-width="1.45"/>
<rect x="1400.4" y="123.1" width="14.6" height="41.1" fill="#000"/>
<line x1="1429.9" y1="149.0" x2="1429.9" y2="176.0" stroke="#000" stroke-width="1.45"/>
<rect x="1422.6" y="162.1" width="14.6" height="2.1" fill="#000"/>
<line x1="1452.1" y1="153.0" x2="1452.1" y2="173.5" stroke="#000" stroke-width="1.45"/>
<rect x="1444.8" y="163.3" width="14.6" height="2.4" fill="#000"/>
<line x1="1474.4" y1="154.5" x2="1474.4" y2="171.5" stroke="#000" stroke-width="1.45"/>
<rect x="1467.8" y="160.0" width="13.2" height="6.2" fill="#fff" stroke="#000" stroke-width="1.45"/>
<line x1="1496.6" y1="147.5" x2="1496.6" y2="166.0" stroke="#000" stroke-width="1.45"/>
<rect x="1490.0" y="153.3" width="13.2" height="7.2" fill="#fff" stroke="#000" stroke-width="1.45"/>
<line x1="1518.8" y1="151.5" x2="1518.8" y2="162.0" stroke="#000" stroke-width="1.45"/>
<rect x="1511.5" y="152.6" width="14.6" height="7.6" fill="#000"/>
<polyline points="6,469.3 26.4,474.7 35.2,476.5 46.6,477.8 63.3,479.6 88,480 118.7,479.6 127.5,476.5 140.7,470.3 149.5,464.2 169,451 203.5,433.7 251.8,411.9 272.5,403.8 318.5,380.8 341.5,367 364.5,356.7 399,342.9 422,337.1 456.5,330.2 475,323 495.6,314.1 537,310.2 560,305.6 590,300 620,294.7 650,288.7 665,287.7 690,289 702.5,289 717.5,289.2 755,286.7 807.5,285.5 816,287 840,290 900,297.5 930,300.5 960,306.5 990,306.5 1020,300.5 1050,298.4 1095,297 1120,295 1141.4,291.4 1169,278.8 1210.4,254.6 1251.8,234 1318.5,211.5 1350,199 1385.2,182.2 1422,177.6 1468,173 1518.6,168.4" fill="none" stroke="#0000ff" stroke-width="3.6" stroke-linejoin="round"/>
<polygon points="1545,97 1559,97 1552,104" fill="#a0a0a0"/></g>
<g clip-path="url(#co)"><line x1="252.1" y1="97" x2="252.1" y2="922" stroke="#000" stroke-width="1.4" stroke-dasharray="4.2,2.8"/>
<line x1="763.0" y1="97" x2="763.0" y2="922" stroke="#000" stroke-width="1.4" stroke-dasharray="4.2,2.8"/>
<line x1="1251.8" y1="97" x2="1251.8" y2="922" stroke="#000" stroke-width="1.4" stroke-dasharray="4.2,2.8"/>
<line x1="1807.5" y1="97" x2="1807.5" y2="922" stroke="#000" stroke-width="1.4" stroke-dasharray="4.2,2.8"/>
<rect x="3.0" y="648.7" width="9.4" height="37.8" fill="#c6c4c8"/>
<rect x="25.2" y="648.7" width="9.4" height="32.6" fill="#c6c4c8"/>
<rect x="47.4" y="648.7" width="9.4" height="21.7" fill="#c6c4c8"/>
<rect x="69.7" y="648.7" width="9.4" height="10.5" fill="#c6c4c8"/>
<rect x="91.9" y="644.4" width="9.4" height="4.3" fill="#c6c4c8"/>
<rect x="114.1" y="635.0" width="9.4" height="13.7" fill="#c6c4c8"/>
<rect x="136.3" y="611.1" width="9.4" height="37.6" fill="#c6c4c8"/>
<rect x="158.6" y="582.0" width="9.4" height="66.7" fill="#c6c4c8"/>
<rect x="180.8" y="566.9" width="9.4" height="81.8" fill="#c6c4c8"/>
<rect x="203.0" y="561.2" width="9.4" height="87.5" fill="#c6c4c8"/>
<rect x="225.2" y="558.3" width="9.4" height="90.4" fill="#c6c4c8"/>
<rect x="247.4" y="559.9" width="9.4" height="88.8" fill="#c6c4c8"/>
<rect x="269.7" y="562.5" width="9.4" height="86.2" fill="#c6c4c8"/>
<rect x="291.9" y="566.9" width="9.4" height="81.8" fill="#c6c4c8"/>
<rect x="314.1" y="572.1" width="9.4" height="76.6" fill="#c6c4c8"/>
<rect x="336.3" y="577.8" width="9.4" height="70.9" fill="#c6c4c8"/>
<rect x="358.6" y="585.9" width="9.4" height="62.8" fill="#c6c4c8"/>
<rect x="380.8" y="594.2" width="9.4" height="54.5" fill="#c6c4c8"/>
<rect x="403.0" y="602.8" width="9.4" height="45.9" fill="#c6c4c8"/>
<rect x="425.2" y="616.8" width="9.4" height="31.9" fill="#c6c4c8"/>
<rect x="447.4" y="626.2" width="9.4" height="22.5" fill="#c6c4c8"/>
<rect x="469.7" y="628.8" width="9.4" height="19.9" fill="#c6c4c8"/>
<rect x="491.9" y="630.6" width="9.4" height="18.1" fill="#c6c4c8"/>
<rect x="514.1" y="644.2" width="9.4" height="4.5" fill="#c6c4c8"/>
<rect x="536.3" y="648.7" width="9.4" height="7.9" fill="#c6c4c8"/>
<rect x="558.6" y="648.7" width="9.4" height="9.2" fill="#c6c4c8"/>
<rect x="580.8" y="648.7" width="9.4" height="7.9" fill="#c6c4c8"/>
<rect x="603.0" y="648.7" width="9.4" height="9.2" fill="#c6c4c8"/>
<rect x="625.2" y="648.7" width="9.4" height="9.2" fill="#c6c4c8"/>
<rect x="647.4" y="648.7" width="9.4" height="9.2" fill="#c6c4c8"/>
<rect x="669.7" y="648.7" width="9.4" height="14.9" fill="#c6c4c8"/>
<rect x="691.9" y="648.7" width="9.4" height="21.7" fill="#c6c4c8"/>
<rect x="714.1" y="648.7" width="9.4" height="28.7" fill="#c6c4c8"/>
<rect x="736.3" y="648.7" width="9.4" height="28.7" fill="#c6c4c8"/>
<rect x="758.5" y="648.7" width="9.4" height="27.4" fill="#c6c4c8"/>
<rect x="780.8" y="648.7" width="9.4" height="27.4" fill="#c6c4c8"/>
<rect x="803.0" y="648.7" width="9.4" height="28.7" fill="#c6c4c8"/>
<rect x="825.2" y="648.7" width="9.4" height="35.7" fill="#c6c4c8"/>
<rect x="847.4" y="648.7" width="9.4" height="37.0" fill="#c6c4c8"/>
<rect x="869.7" y="648.7" width="9.4" height="38.3" fill="#c6c4c8"/>
<rect x="891.9" y="648.7" width="9.4" height="37.0" fill="#c6c4c8"/>
<rect x="914.1" y="648.7" width="9.4" height="38.3" fill="#c6c4c8"/>
<rect x="936.3" y="648.7" width="9.4" height="35.7" fill="#c6c4c8"/>
<rect x="958.5" y="648.7" width="9.4" height="35.7" fill="#c6c4c8"/>
<rect x="980.8" y="648.7" width="9.4" height="28.7" fill="#c6c4c8"/>
<rect x="1003.0" y="648.7" width="9.4" height="17.5" fill="#c6c4c8"/>
<rect x="1025.2" y="648.7" width="9.4" height="9.1" fill="#c6c4c8"/>
<rect x="1047.4" y="648.7" width="9.4" height="4.9" fill="#c6c4c8"/>
<rect x="1069.7" y="647.2" width="9.4" height="1.5" fill="#c6c4c8"/>
<rect x="1091.9" y="645.8" width="9.4" height="2.9" fill="#c6c4c8"/>
<rect x="1114.1" y="643.0" width="9.4" height="5.7" fill="#c6c4c8"/>
<rect x="1136.3" y="637.4" width="9.4" height="11.3" fill="#c6c4c8"/>
<rect x="1158.5" y="619.4" width="9.4" height="29.3" fill="#c6c4c8"/>
<rect x="1180.8" y="605.4" width="9.4" height="43.3" fill="#c6c4c8"/>
<rect x="1203.0" y="596.2" width="9.4" height="52.5" fill="#c6c4c8"/>
<rect x="1225.2" y="590.0" width="9.4" height="58.7" fill="#c6c4c8"/>
<rect x="1247.4" y="587.2" width="9.4" height="61.5" fill="#c6c4c8"/>
<rect x="1269.7" y="592.8" width="9.4" height="55.9" fill="#c6c4c8"/>
<rect x="1291.9" y="601.2" width="9.4" height="47.5" fill="#c6c4c8"/>
<rect x="1314.1" y="605.4" width="9.4" height="43.3" fill="#c6c4c8"/>
<rect x="1336.3" y="609.6" width="9.4" height="39.1" fill="#c6c4c8"/>
<rect x="1358.5" y="615.2" width="9.4" height="33.5" fill="#c6c4c8"/>
<rect x="1380.8" y="618.0" width="9.4" height="30.7" fill="#c6c4c8"/>
<rect x="1403.0" y="632.0" width="9.4" height="16.7" fill="#c6c4c8"/>
<rect x="1425.2" y="644.4" width="9.4" height="4.3" fill="#c6c4c8"/>
<rect x="1447.4" y="648.7" width="9.4" height="6.9" fill="#c6c4c8"/>
<rect x="1469.7" y="648.7" width="9.4" height="15.3" fill="#c6c4c8"/>
<rect x="1491.9" y="648.7" width="9.4" height="19.5" fill="#c6c4c8"/>
<rect x="1514.1" y="648.7" width="9.4" height="23.7" fill="#c6c4c8"/></g>
<g clip-path="url(#cg)"><line x1="252.1" y1="97" x2="252.1" y2="922" stroke="#000" stroke-width="1.4" stroke-dasharray="4.2,2.8"/>
<line x1="763.0" y1="97" x2="763.0" y2="922" stroke="#000" stroke-width="1.4" stroke-dasharray="4.2,2.8"/>
<line x1="1251.8" y1="97" x2="1251.8" y2="922" stroke="#000" stroke-width="1.4" stroke-dasharray="4.2,2.8"/>
<line x1="1807.5" y1="97" x2="1807.5" y2="922" stroke="#000" stroke-width="1.4" stroke-dasharray="4.2,2.8"/>
<rect x="4.2" y="733.5" width="7" height="24.8" fill="#008000"/>
<rect x="4.2" y="758.3" width="7" height="29.0" fill="#008000"/>
<rect x="26.4" y="732.2" width="7" height="26.1" fill="#008000"/>
<rect x="26.4" y="758.3" width="7" height="36.0" fill="#008000"/>
<rect x="48.6" y="729.3" width="7" height="29.0" fill="#008000"/>
<rect x="48.6" y="758.3" width="7" height="37.6" fill="#008000"/>
<rect x="70.9" y="725.4" width="7" height="32.9" fill="#008000"/>
<rect x="70.9" y="758.3" width="7" height="38.9" fill="#008000"/>
<rect x="93.1" y="721.0" width="7" height="37.3" fill="#008000"/>
<rect x="93.1" y="758.3" width="7" height="40.2" fill="#008000"/>
<rect x="115.3" y="717.1" width="7" height="41.2" fill="#008000"/>
<rect x="115.3" y="758.3" width="7" height="34.7" fill="#ff0000"/>
<rect x="137.5" y="715.8" width="7" height="42.5" fill="#008000"/>
<rect x="137.5" y="758.3" width="7" height="26.4" fill="#ff0000"/>
<rect x="159.8" y="717.1" width="7" height="41.2" fill="#ff0000"/>
<rect x="159.8" y="758.3" width="7" height="17.8" fill="#ff0000"/>
<rect x="182.0" y="721.0" width="7" height="37.3" fill="#ff0000"/>
<rect x="182.0" y="758.3" width="7" height="15.2" fill="#ff0000"/>
<rect x="204.2" y="728.0" width="7" height="30.3" fill="#ff0000"/>
<rect x="204.2" y="758.3" width="7" height="5.6" fill="#ff0000"/>
<rect x="226.4" y="732.2" width="7" height="26.1" fill="#ff0000"/>
<rect x="226.4" y="758.3" width="7" height="23.8" fill="#008000"/>
<rect x="248.6" y="743.1" width="7" height="15.2" fill="#ff0000"/>
<rect x="248.6" y="758.3" width="7" height="33.4" fill="#008000"/>
<rect x="270.9" y="755.6" width="7" height="2.7" fill="#ff0000"/>
<rect x="270.9" y="758.3" width="7" height="37.6" fill="#008000"/>
<rect x="293.1" y="747.5" width="7" height="10.8" fill="#008000"/>
<rect x="293.1" y="758.3" width="7" height="37.6" fill="#ff0000"/>
<rect x="315.3" y="740.5" width="7" height="17.8" fill="#008000"/>
<rect x="315.3" y="758.3" width="7" height="38.9" fill="#008000"/>
<rect x="337.5" y="736.1" width="7" height="22.2" fill="#008000"/>
<rect x="337.5" y="758.3" width="7" height="42.0" fill="#008000"/>
<rect x="359.8" y="734.8" width="7" height="23.5" fill="#008000"/>
<rect x="359.8" y="758.3" width="7" height="44.6" fill="#008000"/>
<rect x="382.0" y="730.6" width="7" height="27.7" fill="#008000"/>
<rect x="382.0" y="758.3" width="7" height="47.2" fill="#008000"/>
<rect x="404.2" y="725.4" width="7" height="32.9" fill="#008000"/>
<rect x="404.2" y="758.3" width="7" height="49.0" fill="#008000"/>
<rect x="426.4" y="721.0" width="7" height="37.3" fill="#008000"/>
<rect x="426.4" y="758.3" width="7" height="49.8" fill="#008000"/>
<rect x="448.6" y="717.1" width="7" height="41.2" fill="#008000"/>
<rect x="448.6" y="758.3" width="7" height="49.8" fill="#008000"/>
<rect x="470.9" y="714.0" width="7" height="44.3" fill="#008000"/>
<rect x="470.9" y="758.3" width="7" height="47.2" fill="#ff0000"/>
<rect x="493.1" y="711.1" width="7" height="47.2" fill="#008000"/>
<rect x="493.1" y="758.3" width="7" height="42.8" fill="#ff0000"/>
<rect x="515.3" y="711.1" width="7" height="47.2" fill="#008000"/>
<rect x="515.3" y="758.3" width="7" height="37.6" fill="#ff0000"/>
<rect x="537.5" y="711.1" width="7" height="47.2" fill="#ff0000"/>
<rect x="537.5" y="758.3" width="7" height="37.6" fill="#ff0000"/>
<rect x="559.8" y="714.0" width="7" height="44.3" fill="#ff0000"/>
<rect x="559.8" y="758.3" width="7" height="41.5" fill="#008000"/>
<rect x="582.0" y="714.0" width="7" height="44.3" fill="#008000"/>
<rect x="582.0" y="758.3" width="7" height="38.9" fill="#ff0000"/>
<rect x="604.2" y="711.1" width="7" height="47.2" fill="#008000"/>
<rect x="604.2" y="758.3" width="7" height="27.7" fill="#ff0000"/>
<rect x="626.4" y="711.1" width="7" height="47.2" fill="#008000"/>
<rect x="626.4" y="758.3" width="7" height="23.8" fill="#ff0000"/>
<rect x="648.6" y="716.6" width="7" height="41.7" fill="#ff0000"/>
<rect x="648.6" y="758.3" width="7" height="27.7" fill="#008000"/>
<rect x="670.9" y="721.0" width="7" height="37.3" fill="#ff0000"/>
<rect x="670.9" y="758.3" width="7" height="29.0" fill="#008000"/>
<rect x="693.1" y="721.0" width="7" height="37.3" fill="#ff0000"/>
<rect x="693.1" y="758.3" width="7" height="29.0" fill="#008000"/>
<rect x="715.3" y="717.9" width="7" height="40.4" fill="#008000"/>
<rect x="715.3" y="758.3" width="7" height="29.0" fill="#008000"/>
<rect x="737.5" y="716.6" width="7" height="41.7" fill="#008000"/>
<rect x="737.5" y="758.3" width="7" height="25.1" fill="#ff0000"/>
<rect x="759.7" y="716.6" width="7" height="41.7" fill="#008000"/>
<rect x="759.7" y="758.3" width="7" height="17.8" fill="#ff0000"/>
<rect x="782.0" y="719.2" width="7" height="39.1" fill="#ff0000"/>
<rect x="782.0" y="758.3" width="7" height="10.8" fill="#ff0000"/>
<rect x="804.2" y="723.6" width="7" height="34.7" fill="#ff0000"/>
<rect x="804.2" y="758.3" width="7" height="8.2" fill="#ff0000"/>
<rect x="826.4" y="730.6" width="7" height="27.7" fill="#ff0000"/>
<rect x="826.4" y="758.3" width="7" height="10.8" fill="#008000"/>
<rect x="848.6" y="733.2" width="7" height="25.1" fill="#ff0000"/>
<rect x="848.6" y="758.3" width="7" height="13.4" fill="#008000"/>
<rect x="870.9" y="733.2" width="7" height="25.1" fill="#ff0000"/>
<rect x="870.9" y="758.3" width="7" height="10.8" fill="#ff0000"/>
<rect x="893.1" y="732.2" width="7" height="26.1" fill="#008000"/>
<rect x="893.1" y="758.3" width="7" height="3.8" fill="#ff0000"/>
<rect x="915.3" y="733.2" width="7" height="25.1" fill="#ff0000"/>
<rect x="915.3" y="758.3" width="7" height="6.4" fill="#008000"/>
<rect x="937.5" y="739.2" width="7" height="19.1" fill="#ff0000"/>
<rect x="937.5" y="758.3" width="7" height="6.4" fill="#008000"/>
<rect x="959.7" y="746.2" width="7" height="12.1" fill="#ff0000"/>
<rect x="959.7" y="758.3" width="7" height="8.2" fill="#008000"/>
<rect x="982.0" y="748.8" width="7" height="9.5" fill="#ff0000"/>
<rect x="982.0" y="758.3" width="7" height="9.5" fill="#008000"/>
<rect x="1004.2" y="751.6" width="7" height="6.7" fill="#ff0000"/>
<rect x="1004.2" y="758.3" width="7" height="9.4" fill="#ff0000"/>
<rect x="1026.4" y="752.8" width="7" height="5.5" fill="#ff0000"/>
<rect x="1026.4" y="758.3" width="7" height="9.3" fill="#008000"/>
<rect x="1048.6" y="754.4" width="7" height="3.9" fill="#ff0000"/>
<rect x="1048.6" y="758.3" width="7" height="11.0" fill="#008000"/>
<rect x="1070.9" y="756.0" width="7" height="2.3" fill="#ff0000"/>
<rect x="1070.9" y="758.3" width="7" height="5.3" fill="#ff0000"/>
<rect x="1093.1" y="757.0" width="7" height="1.3" fill="#ff0000"/>
<rect x="1093.1" y="758.3" width="7" height="3.7" fill="#ff0000"/>
<rect x="1115.3" y="756.0" width="7" height="2.3" fill="#008000"/>
<rect x="1115.3" y="758.3" width="7" height="5.3" fill="#008000"/>
<rect x="1137.5" y="752.8" width="7" height="5.5" fill="#008000"/>
<rect x="1137.5" y="758.3" width="7" height="5.3" fill="#ff0000"/>
<rect x="1159.7" y="750.1" width="7" height="8.2" fill="#008000"/>
<rect x="1159.7" y="758.3" width="7" height="3.7" fill="#ff0000"/>
<rect x="1182.0" y="750.1" width="7" height="8.2" fill="#ff0000"/>
<rect x="1182.0" y="758.3" width="7" height="6.7" fill="#008000"/>
<rect x="1204.2" y="750.1" width="7" height="8.2" fill="#ff0000"/>
<rect x="1204.2" y="758.3" width="7" height="9.3" fill="#008000"/>
<rect x="1226.4" y="750.1" width="7" height="8.2" fill="#008000"/>
<rect x="1226.4" y="758.3" width="7" height="19.2" fill="#008000"/>
<rect x="1248.6" y="748.8" width="7" height="9.5" fill="#008000"/>
<rect x="1248.6" y="758.3" width="7" height="30.1" fill="#008000"/>
<rect x="1270.9" y="742.2" width="7" height="16.1" fill="#008000"/>
<rect x="1270.9" y="758.3" width="7" height="41.7" fill="#008000"/>
<rect x="1293.1" y="733.6" width="7" height="24.7" fill="#008000"/>
<rect x="1293.1" y="758.3" width="7" height="44.0" fill="#008000"/>
<rect x="1315.3" y="724.0" width="7" height="34.3" fill="#008000"/>
<rect x="1315.3" y="758.3" width="7" height="44.0" fill="#008000"/>
<rect x="1337.5" y="718.1" width="7" height="40.2" fill="#008000"/>
<rect x="1337.5" y="758.3" width="7" height="44.0" fill="#008000"/>
<rect x="1359.7" y="714.1" width="7" height="44.2" fill="#008000"/>
<rect x="1359.7" y="758.3" width="7" height="43.0" fill="#ff0000"/>
<rect x="1382.0" y="714.1" width="7" height="44.2" fill="#008000"/>
<rect x="1382.0" y="758.3" width="7" height="41.7" fill="#ff0000"/>
<rect x="1404.2" y="712.5" width="7" height="45.8" fill="#008000"/>
<rect x="1404.2" y="758.3" width="7" height="44.0" fill="#008000"/>
<rect x="1426.4" y="712.5" width="7" height="45.8" fill="#ff0000"/>
<rect x="1426.4" y="758.3" width="7" height="48.2" fill="#008000"/>
<rect x="1448.6" y="709.9" width="7" height="48.4" fill="#008000"/>
<rect x="1448.6" y="758.3" width="7" height="48.2" fill="#008000"/>
<rect x="1470.9" y="707.2" width="7" height="51.1" fill="#008000"/>
<rect x="1470.9" y="758.3" width="7" height="44.0" fill="#ff0000"/>
<rect x="1493.1" y="703.3" width="7" height="55.0" fill="#008000"/>
<rect x="1493.1" y="758.3" width="7" height="34.1" fill="#ff0000"/>
<rect x="1515.3" y="704.2" width="7" height="54.1" fill="#ff0000"/>
<rect x="1515.3" y="758.3" width="7" height="27.5" fill="#ff0000"/>
<rect x="1537.5" y="709.9" width="7" height="48.4" fill="#ff0000"/>
<rect x="1537.5" y="758.3" width="7" height="24.8" fill="#ff0000"/>
<rect x="1559.7" y="715.5" width="7" height="42.8" fill="#ff0000"/>
<rect x="1559.7" y="758.3" width="7" height="23.2" fill="#ff0000"/>
<rect x="1582.0" y="719.1" width="7" height="39.2" fill="#ff0000"/>
<rect x="1582.0" y="758.3" width="7" height="21.8" fill="#ff0000"/>
<rect x="1604.2" y="719.1" width="7" height="39.2" fill="#ff0000"/>
<rect x="1626.4" y="720.7" width="7" height="37.6" fill="#ff0000"/></g>
<g clip-path="url(#ca)"><line x1="252.1" y1="97" x2="252.1" y2="922" stroke="#000" stroke-width="1.4" stroke-dasharray="4.2,2.8"/>
<line x1="763.0" y1="97" x2="763.0" y2="922" stroke="#000" stroke-width="1.4" stroke-dasharray="4.2,2.8"/>
<line x1="1251.8" y1="97" x2="1251.8" y2="922" stroke="#000" stroke-width="1.4" stroke-dasharray="4.2,2.8"/>
<line x1="1807.5" y1="97" x2="1807.5" y2="922" stroke="#000" stroke-width="1.4" stroke-dasharray="4.2,2.8"/>
<rect x="3.0" y="887.4" width="9.4" height="22.1" fill="#ff0000"/>
<rect x="25.2" y="887.4" width="9.4" height="24.7" fill="#ff0000"/>
<rect x="47.4" y="887.4" width="9.4" height="16.1" fill="#0000ff"/>
<rect x="69.7" y="887.4" width="9.4" height="3.9" fill="#0000ff"/>
<rect x="91.9" y="876.2" width="9.4" height="11.2" fill="#0000ff"/>
<rect x="114.1" y="866.6" width="9.4" height="20.8" fill="#0000ff"/>
<rect x="136.3" y="847.1" width="9.4" height="40.3" fill="#0000ff"/>
<rect x="158.6" y="835.9" width="9.4" height="51.5" fill="#0000ff"/>
<rect x="180.8" y="825.0" width="9.4" height="62.4" fill="#0000ff"/>
<rect x="203.0" y="823.7" width="9.4" height="63.7" fill="#0000ff"/>
<rect x="225.2" y="822.4" width="9.4" height="65.0" fill="#0000ff"/>
<rect x="247.4" y="835.9" width="9.4" height="51.5" fill="#ff0000"/>
<rect x="269.7" y="848.4" width="9.4" height="39.0" fill="#ff0000"/>
<rect x="291.9" y="860.9" width="9.4" height="26.5" fill="#ff0000"/>
<rect x="314.1" y="865.3" width="9.4" height="22.1" fill="#ff0000"/>
<rect x="336.3" y="864.0" width="9.4" height="23.4" fill="#0000ff"/>
<rect x="358.6" y="864.0" width="9.4" height="23.4" fill="#0000ff"/>
<rect x="380.8" y="865.3" width="9.4" height="22.1" fill="#ff0000"/>
<rect x="403.0" y="869.2" width="9.4" height="18.2" fill="#ff0000"/>
<rect x="425.2" y="876.2" width="9.4" height="11.2" fill="#ff0000"/>
<rect x="447.4" y="884.8" width="9.4" height="2.6" fill="#ff0000"/>
<rect x="469.7" y="885.6" width="9.4" height="1.8" fill="#ff0000"/>
<rect x="491.9" y="885.8" width="9.4" height="1.6" fill="#0000ff"/>
<rect x="514.1" y="887.4" width="9.4" height="1.5" fill="#ff0000"/>
<rect x="536.3" y="887.4" width="9.4" height="6.5" fill="#ff0000"/>
<rect x="558.6" y="887.4" width="9.4" height="6.5" fill="#ff0000"/>
<rect x="580.8" y="887.4" width="9.4" height="8.3" fill="#ff0000"/>
<rect x="603.0" y="887.4" width="9.4" height="12.2" fill="#ff0000"/>
<rect x="625.2" y="887.4" width="9.4" height="10.9" fill="#0000ff"/>
<rect x="647.4" y="887.4" width="9.4" height="1.6" fill="#0000ff"/>
<rect x="669.7" y="887.4" width="9.4" height="1.6" fill="#ff0000"/>
<rect x="691.9" y="887.4" width="9.4" height="8.3" fill="#ff0000"/>
<rect x="714.1" y="887.4" width="9.4" height="19.5" fill="#ff0000"/>
<rect x="736.3" y="887.4" width="9.4" height="27.3" fill="#ff0000"/>
<rect x="758.5" y="887.4" width="9.4" height="30.4" fill="#ff0000"/>
<rect x="780.8" y="887.4" width="9.4" height="26.0" fill="#0000ff"/>
<rect x="803.0" y="887.4" width="9.4" height="22.1" fill="#0000ff"/>
<rect x="825.2" y="887.4" width="9.4" height="19.5" fill="#0000ff"/>
<rect x="847.4" y="887.4" width="9.4" height="22.1" fill="#ff0000"/>
<rect x="869.7" y="887.4" width="9.4" height="26.0" fill="#ff0000"/>
<rect x="891.9" y="887.4" width="9.4" height="29.1" fill="#ff0000"/>
<rect x="914.1" y="887.4" width="9.4" height="27.3" fill="#0000ff"/>
<rect x="936.3" y="887.4" width="9.4" height="20.3" fill="#0000ff"/>
<rect x="958.5" y="887.4" width="9.4" height="12.2" fill="#0000ff"/>
<rect x="980.8" y="887.4" width="9.4" height="10.9" fill="#0000ff"/>
<rect x="1003.0" y="887.4" width="9.4" height="4.1" fill="#0000ff"/>
<rect x="1025.2" y="884.9" width="9.4" height="2.5" fill="#0000ff"/>
<rect x="1047.4" y="880.4" width="9.4" height="7.0" fill="#0000ff"/>
<rect x="1069.7" y="877.4" width="9.4" height="10.0" fill="#0000ff"/>
<rect x="1091.9" y="875.0" width="9.4" height="12.4" fill="#0000ff"/>
<rect x="1114.1" y="877.4" width="9.4" height="10.0" fill="#ff0000"/>
<rect x="1136.3" y="878.9" width="9.4" height="8.5" fill="#ff0000"/>
<rect x="1158.5" y="875.0" width="9.4" height="12.4" fill="#0000ff"/>
<rect x="1180.8" y="863.9" width="9.4" height="23.5" fill="#0000ff"/>
<rect x="1203.0" y="851.0" width="9.4" height="36.4" fill="#0000ff"/>
<rect x="1225.2" y="844.4" width="9.4" height="43.0" fill="#0000ff"/>
<rect x="1247.4" y="841.4" width="9.4" height="46.0" fill="#0000ff"/>
<rect x="1269.7" y="848.6" width="9.4" height="38.8" fill="#ff0000"/>
<rect x="1291.9" y="860.9" width="9.4" height="26.5" fill="#ff0000"/>
<rect x="1314.1" y="875.0" width="9.4" height="12.4" fill="#ff0000"/>
<rect x="1336.3" y="877.4" width="9.4" height="10.0" fill="#ff0000"/>
<rect x="1358.5" y="877.4" width="9.4" height="10.0" fill="#0000ff"/>
<rect x="1380.8" y="875.0" width="9.4" height="12.4" fill="#0000ff"/>
<rect x="1403.0" y="875.0" width="9.4" height="12.4" fill="#ff0000"/>
<rect x="1425.2" y="881.9" width="9.4" height="5.5" fill="#ff0000"/>
<rect x="1447.4" y="887.4" width="9.4" height="5.6" fill="#ff0000"/>
<rect x="1469.7" y="887.4" width="9.4" height="16.1" fill="#ff0000"/>
<rect x="1491.9" y="887.4" width="9.4" height="22.1" fill="#ff0000"/>
<rect x="1514.1" y="887.4" width="9.4" height="22.1" fill="#0000ff"/></g>
<rect x="6.3" y="96.8" width="1936.4" height="450.8" fill="none" stroke="#000" stroke-width="1.4"/>
<rect x="6.3" y="550.3" width="1936.4" height="143.2" fill="none" stroke="#000" stroke-width="1.4"/>
<rect x="6.3" y="697.2" width="1936.4" height="116.0" fill="none" stroke="#000" stroke-width="1.4"/>
<rect x="6.3" y="815.8" width="1936.4" height="106.6" fill="none" stroke="#000" stroke-width="1.4"/>
<line x1="1943" y1="130.5" x2="1947" y2="130.5" stroke="#000" stroke-width="1.4"/>
<text x="1951" y="135.7" font-size="13.2" fill="#000">130.35</text>
<line x1="1943" y1="176.6" x2="1947" y2="176.6" stroke="#000" stroke-width="1.4"/>
<text x="1951" y="181.79999999999998" font-size="13.2" fill="#000">128.60</text>
<line x1="1943" y1="222.3" x2="1947" y2="222.3" stroke="#000" stroke-width="1.4"/>
<text x="1951" y="227.5" font-size="13.2" fill="#000">126.85</text>
<line x1="1943" y1="268.3" x2="1947" y2="268.3" stroke="#000" stroke-width="1.4"/>
<text x="1951" y="273.5" font-size="13.2" fill="#000">125.10</text>
<line x1="1943" y1="313.8" x2="1947" y2="313.8" stroke="#000" stroke-width="1.4"/>
<text x="1951" y="319.0" font-size="13.2" fill="#000">123.30</text>
<line x1="1943" y1="359.6" x2="1947" y2="359.6" stroke="#000" stroke-width="1.4"/>
<text x="1951" y="364.8" font-size="13.2" fill="#000">121.55</text>
<line x1="1943" y1="405.5" x2="1947" y2="405.5" stroke="#000" stroke-width="1.4"/>
<text x="1951" y="410.7" font-size="13.2" fill="#000">119.80</text>
<line x1="1943" y1="451.4" x2="1947" y2="451.4" stroke="#000" stroke-width="1.4"/>
<text x="1951" y="456.59999999999997" font-size="13.2" fill="#000">118.05</text>
<line x1="1943" y1="497.3" x2="1947" y2="497.3" stroke="#000" stroke-width="1.4"/>
<text x="1951" y="502.5" font-size="13.2" fill="#000">116.30</text>
<line x1="1943" y1="543.1" x2="1947" y2="543.1" stroke="#000" stroke-width="1.4"/>
<text x="1951" y="548.3000000000001" font-size="13.2" fill="#000">114.55</text>
<line x1="1943" y1="561" x2="1947" y2="561" stroke="#000" stroke-width="1.4"/>
<text x="1949" y="566.2" font-size="13.2" fill="#000">0.975</text>
<line x1="1943" y1="649" x2="1947" y2="649" stroke="#000" stroke-width="1.4"/>
<text x="1949" y="654.2" font-size="13.2" fill="#000">0.00</text>
<line x1="1943" y1="684" x2="1947" y2="684" stroke="#000" stroke-width="1.4"/>
<text x="1949" y="689.2" font-size="13.2" fill="#000">-0.4363</text>
<line x1="1943" y1="706" x2="1947" y2="706" stroke="#000" stroke-width="1.4"/>
<text x="1949" y="711.2" font-size="13.2" fill="#000">2.18</text>
<line x1="1943" y1="759" x2="1947" y2="759" stroke="#000" stroke-width="1.4"/>
<text x="1949" y="764.2" font-size="13.2" fill="#000">0.00</text>
<line x1="1943" y1="803" x2="1947" y2="803" stroke="#000" stroke-width="1.4"/>
<text x="1949" y="808.2" font-size="13.2" fill="#000">-1.904</text>
<line x1="1943" y1="826" x2="1947" y2="826" stroke="#000" stroke-width="1.4"/>
<text x="1949" y="831.2" font-size="13.2" fill="#000">1.9293</text>
<line x1="1943" y1="888" x2="1947" y2="888" stroke="#000" stroke-width="1.4"/>
<text x="1949" y="893.2" font-size="13.2" fill="#000">0.00</text>
<line x1="1943" y1="913" x2="1947" y2="913" stroke="#000" stroke-width="1.4"/>
<text x="1949" y="918.2" font-size="13.2" fill="#000">-0.9581</text>
<rect x="1944" y="151" width="49" height="15" fill="#000"/>
<text x="1949" y="163.5" font-size="13.2" fill="#fff">129.26</text>
<text x="13" y="568" font-size="13.2" fill="#000">OsMA(12,26,9) -0.2246</text>
<text x="13" y="714" font-size="13.2" fill="#000">Gator(13,8,5) 1.954 -0.932</text>
<text x="13" y="834" font-size="13.2" fill="#000">AC -0.5893</text>
<polygon points="12,112 22,112 17,106" fill="#000"/>
<text x="28" y="112.5" font-size="13.2" fill="#000" xml:space="preserve">EURJPY,Daily  129.48 129.53 129.18 129.26</text>
<line x1="7.7" y1="922" x2="7.7" y2="927" stroke="#000" stroke-width="1.4"/>
<text x="6.2" y="940.5" font-size="13.2" fill="#000">14 Apr 2017</text>
<line x1="96.6" y1="922" x2="96.6" y2="927" stroke="#000" stroke-width="1.4"/>
<text x="95.1" y="940.5" font-size="13.2" fill="#000">20 Apr 2017</text>
<line x1="185.5" y1="922" x2="185.5" y2="927" stroke="#000" stroke-width="1.4"/>
<text x="184.0" y="940.5" font-size="13.2" fill="#000">26 Apr 2017</text>
<line x1="274.4" y1="922" x2="274.4" y2="927" stroke="#000" stroke-width="1.4"/>
<text x="272.9" y="940.5" font-size="13.2" fill="#000">2 May 2017</text>
<line x1="363.3" y1="922" x2="363.3" y2="927" stroke="#000" stroke-width="1.4"/>
<text x="361.8" y="940.5" font-size="13.2" fill="#000">8 May 2017</text>
<line x1="452.1" y1="922" x2="452.1" y2="927" stroke="#000" stroke-width="1.4"/>
<text x="450.6" y="940.5" font-size="13.2" fill="#000">12 May 2017</text>
<line x1="541.0" y1="922" x2="541.0" y2="927" stroke="#000" stroke-width="1.4"/>
<text x="539.5" y="940.5" font-size="13.2" fill="#000">18 May 2017</text>
<line x1="629.9" y1="922" x2="629.9" y2="927" stroke="#000" stroke-width="1.4"/>
<text x="628.4" y="940.5" font-size="13.2" fill="#000">24 May 2017</text>
<line x1="718.8" y1="922" x2="718.8" y2="927" stroke="#000" stroke-width="1.4"/>
<text x="717.3" y="940.5" font-size="13.2" fill="#000">30 May 2017</text>
<line x1="807.7" y1="922" x2="807.7" y2="927" stroke="#000" stroke-width="1.4"/>
<text x="806.2" y="940.5" font-size="13.2" fill="#000">5 Jun 2017</text>
<line x1="896.6" y1="922" x2="896.6" y2="927" stroke="#000" stroke-width="1.4"/>
<text x="895.1" y="940.5" font-size="13.2" fill="#000">9 Jun 2017</text>
<line x1="985.5" y1="922" x2="985.5" y2="927" stroke="#000" stroke-width="1.4"/>
<text x="984.0" y="940.5" font-size="13.2" fill="#000">15 Jun 2017</text>
<line x1="1074.4" y1="922" x2="1074.4" y2="927" stroke="#000" stroke-width="1.4"/>
<text x="1072.9" y="940.5" font-size="13.2" fill="#000">21 Jun 2017</text>
<line x1="1163.2" y1="922" x2="1163.2" y2="927" stroke="#000" stroke-width="1.4"/>
<text x="1161.7" y="940.5" font-size="13.2" fill="#000">27 Jun 2017</text>
<line x1="1252.1" y1="922" x2="1252.1" y2="927" stroke="#000" stroke-width="1.4"/>
<text x="1250.6" y="940.5" font-size="13.2" fill="#000">3 Jul 2017</text>
<line x1="1341.0" y1="922" x2="1341.0" y2="927" stroke="#000" stroke-width="1.4"/>
<text x="1339.5" y="940.5" font-size="13.2" fill="#000">7 Jul 2017</text>
<line x1="1429.9" y1="922" x2="1429.9" y2="927" stroke="#000" stroke-width="1.4"/>
<text x="1428.4" y="940.5" font-size="13.2" fill="#000">13 Jul 2017</text>
<line x1="1518.8" y1="922" x2="1518.8" y2="927" stroke="#000" stroke-width="1.4"/>
<text x="1517.3" y="940.5" font-size="13.2" fill="#000">19 Jul 2017</text>
</svg>

<div class="a" style="left:11px;top:118px;width:61px;height:29px;background:linear-gradient(#5a5aff,#2a2ae6);border-top:1.4px solid #0000b0"></div>
<div class="t" style="left:24px;top:125px;color:#e8e8ff;font-size:15.5px;letter-spacing:-0.3px">SELL</div>
<div class="a" style="left:11px;top:146px;width:129px;height:39px;background:linear-gradient(#2e2ef0,#0000c0);border-bottom:1.4px solid #0000a0"></div>
<div class="a" style="left:17px;top:145.8px;width:50px;height:1.4px;background:#8a8aff"></div>
<div class="t" style="left:42px;top:168px;color:#fff;font-size:15.5px;font-weight:bold;font-family:'Liberation Serif',serif">129</div>
<div class="t" style="left:76px;top:146px;color:#fff;font-size:44px;letter-spacing:-1px">26</div>
<div class="a" style="left:210px;top:118px;width:61px;height:29px;background:linear-gradient(#5a5aff,#2a2ae6);border-top:1.4px solid #0000b0"></div>
<div class="t" style="left:225px;top:125px;color:#e8e8ff;font-size:15.5px;letter-spacing:-0.3px">BUY</div>
<div class="a" style="left:143px;top:146px;width:128px;height:39px;background:linear-gradient(#2e2ef0,#0000c0);border-bottom:1.4px solid #0000a0"></div>
<div class="a" style="left:215px;top:145.8px;width:50px;height:1.4px;background:#8a8aff"></div>
<div class="t" style="left:173px;top:168px;color:#fff;font-size:15.5px;font-weight:bold;font-family:'Liberation Serif',serif">129</div>
<div class="t" style="left:207px;top:146px;color:#fff;font-size:44px;letter-spacing:-1px">30</div>
<div class="a" style="left:74.5px;top:117.5px;width:132.5px;height:25.5px;background:#fff;border:1.5px solid #000"></div>
<div class="a" style="left:76px;top:119px;width:22.5px;height:22.5px;background:#d4d0c8;border-right:1.4px solid #000"></div>
<div class="a" style="left:81px;top:128px;width:0;height:0;border-left:5px solid transparent;border-right:5px solid transparent;border-top:6px solid #000"></div>
<div class="a" style="left:182.5px;top:119px;width:23px;height:22.5px;background:#d4d0c8;border-left:1.4px solid #000"></div>
<div class="a" style="left:189px;top:127px;width:0;height:0;border-left:5px solid transparent;border-right:5px solid transparent;border-bottom:6px solid #000"></div>
<div class="t" style="left:145px;top:123px;font-size:15.3px">0.04</div>


<div class="a" style="left:3px;top:952px;width:1994px;height:1.4px;background:#eeeeee"></div>
<div class="a" style="left:0;top:953.5px;width:2000px;height:27.5px;background:#d4d0c8"></div>
<div class="a" style="left:2px;top:954px;width:1.5px;height:27px;background:#808080"></div>
<div class="a" style="left:0px;top:954px;width:2000px;height:1.5px;background:#303030"></div>
<div class="a" style="left:9px;top:954px;width:121px;height:27px;background:#fff;border-left:1.5px solid #303030;border-right:1.5px solid #303030;border-bottom:2px solid #303030"></div>
<div class="t" style="left:24px;top:959px;font-size:15.3px;letter-spacing:-0.6px">EURJPY,Daily</div>
<div class="t" style="left:143.5px;top:959px;font-size:15.3px;letter-spacing:-0.6px;color:#505050">GBPJPY,Daily</div>
<div class="a" style="left:247.5px;top:958px;width:1.5px;height:19px;background:#404040"></div>
<svg class="a" style="left:1950px;top:960px" width="40" height="14" viewBox="0 0 40 14"><path d="M10 3 L5 7 L10 11 Z M31 3 L36 7 L31 11 Z" fill="#a0a0a0"/></svg>
<div class="a" style="left:0;top:981px;width:2000px;height:1.5px;background:#fff"></div>

<div class="a" style="left:0;top:983px;width:2000px;height:168px;background:#d4d0c8"></div>
<svg class="a" style="left:4px;top:989px" width="14" height="12" viewBox="0 0 14 12"><path d="M3 2.5 L10 9.5 M10 2.5 L3 9.5" stroke="#000" stroke-width="2"/></svg>
<div class="a" style="left:1.5px;top:1007px;width:17.5px;height:144px;background:#808080"></div>
<div class="t" style="left:-21px;top:1107px;width:66px;transform:rotate(-90deg);transform-origin:33px 8px;color:#d0d0d0;font-size:14.8px">Терминал</div>
<div class="a" style="left:22px;top:988px;width:1974px;height:137px;background:#fff"></div>
<div class="a" style="left:22px;top:988.4px;width:1972px;height:23.5px;background:#d4d0c8;border-top:1.4px solid #fff;border-bottom:2px solid #505050"></div>
<div class="t" style="left:30px;top:993.5px">Ордер</div>
<div class="a" style="left:199.5px;top:989px;width:1.6px;height:21px;background:#505050"></div><div class="a" style="left:201.1px;top:989px;width:1.4px;height:21px;background:#fff"></div>
<div class="t" style="left:201px;top:993.5px;width:243.5px;text-align:right">Время</div>
<div class="a" style="left:451.0px;top:989px;width:1.6px;height:21px;background:#505050"></div><div class="a" style="left:452.6px;top:989px;width:1.4px;height:21px;background:#fff"></div>
<div class="t" style="left:452.5px;top:993.5px;width:117.5px;text-align:right">Тип</div>
<div class="a" style="left:576.5px;top:989px;width:1.6px;height:21px;background:#505050"></div><div class="a" style="left:578.1px;top:989px;width:1.4px;height:21px;background:#fff"></div>
<div class="t" style="left:578px;top:993.5px;width:89.5px;text-align:right">Объем</div>
<div class="a" style="left:674.0px;top:989px;width:1.6px;height:21px;background:#505050"></div><div class="a" style="left:675.6px;top:989px;width:1.4px;height:21px;background:#fff"></div>
<div class="t" style="left:675.5px;top:993.5px;width:116.5px;text-align:right">Символ</div>
<div class="a" style="left:798.5px;top:989px;width:1.6px;height:21px;background:#505050"></div><div class="a" style="left:800.1px;top:989px;width:1.4px;height:21px;background:#fff"></div>
<div class="t" style="left:800px;top:993.5px;width:131px;text-align:right">Цена</div>
<div class="a" style="left:937.5px;top:989px;width:1.6px;height:21px;background:#505050"></div><div class="a" style="left:939.1px;top:989px;width:1.4px;height:21px;background:#fff"></div>
<div class="t" style="left:939px;top:993.5px;width:131px;text-align:right">S / L</div>
<div class="a" style="left:1076.5px;top:989px;width:1.6px;height:21px;background:#505050"></div><div class="a" style="left:1078.1px;top:989px;width:1.4px;height:21px;background:#fff"></div>
<div class="t" style="left:1078px;top:993.5px;width:131px;text-align:right">T / P</div>
<div class="a" style="left:1215.5px;top:989px;width:1.6px;height:21px;background:#505050"></div><div class="a" style="left:1217.1px;top:989px;width:1.4px;height:21px;background:#fff"></div>
<div class="t" style="left:1217px;top:993.5px;width:131px;text-align:right">Цена</div>
<div class="a" style="left:1354.5px;top:989px;width:1.6px;height:21px;background:#505050"></div><div class="a" style="left:1356.1px;top:989px;width:1.4px;height:21px;background:#fff"></div>
<div class="t" style="left:1356px;top:993.5px;width:131px;text-align:right">Комиссия</div>
<div class="a" style="left:1493.5px;top:989px;width:1.6px;height:21px;background:#505050"></div><div class="a" style="left:1495.1px;top:989px;width:1.4px;height:21px;background:#fff"></div>
<div class="t" style="left:1495px;top:993.5px;width:131.29999999999995px;text-align:right">Налоги</div>
<div class="a" style="left:1632.8px;top:989px;width:1.6px;height:21px;background:#505050"></div><div class="a" style="left:1634.3999999999999px;top:989px;width:1.4px;height:21px;background:#fff"></div>
<div class="t" style="left:1634.3px;top:993.5px;width:130.20000000000005px;text-align:right">Своп</div>
<div class="a" style="left:1771.0px;top:989px;width:1.6px;height:21px;background:#505050"></div><div class="a" style="left:1772.6px;top:989px;width:1.4px;height:21px;background:#fff"></div>
<div class="t" style="left:1772.5px;top:993.5px;width:213.5px;text-align:right">Прибыль</div>
<svg class="a" style="left:91px;top:995px" width="14" height="12" viewBox="0 0 14 12"><path d="M7 1.5 L12.5 10.5 H1.5 Z" fill="none" stroke="#ffffff" stroke-width="1.2"/><path d="M7 2.5 L1.5 10.5" stroke="#a0a0a0" stroke-width="1"/></svg>
<div class="a" style="left:1993px;top:988px;width:1.5px;height:24px;background:#505050"></div>
<div class="t" style="left:53px;top:1018.5px">1778548977</div>
<div class="a" style="left:199.5px;top:1012px;width:1.2px;height:28px;background:#e4e4e4"></div>
<div class="t" style="left:201px;top:1018.5px;width:245.5px;text-align:right">2017.07.19 07:22:31</div>
<div class="a" style="left:451.0px;top:1012px;width:1.2px;height:28px;background:#e4e4e4"></div>
<div class="t" style="left:452.5px;top:1018.5px;width:119.5px;text-align:right">sell</div>
<div class="a" style="left:576.5px;top:1012px;width:1.2px;height:28px;background:#e4e4e4"></div>
<div class="t" style="left:578px;top:1018.5px;width:91.5px;text-align:right">0.03</div>
<div class="a" style="left:674.0px;top:1012px;width:1.2px;height:28px;background:#e4e4e4"></div>
<div class="t" style="left:675.5px;top:1018.5px;width:118.5px;text-align:right">gbpjpy</div>
<div class="a" style="left:798.5px;top:1012px;width:1.2px;height:28px;background:#e4e4e4"></div>
<div class="t" style="left:800px;top:1018.5px;width:133px;text-align:right">145.97</div>
<div class="a" style="left:937.5px;top:1012px;width:1.2px;height:28px;background:#e4e4e4"></div>
<div class="t" style="left:939px;top:1018.5px;width:133px;text-align:right">148.10</div>
<div class="a" style="left:1076.5px;top:1012px;width:1.2px;height:28px;background:#e4e4e4"></div>
<div class="t" style="left:1078px;top:1018.5px;width:133px;text-align:right">140.10</div>
<div class="a" style="left:1215.5px;top:1012px;width:1.2px;height:28px;background:#e4e4e4"></div>
<div class="t" style="left:1217px;top:1018.5px;width:133px;text-align:right">146.04</div>
<div class="a" style="left:1354.5px;top:1012px;width:1.2px;height:28px;background:#e4e4e4"></div>
<div class="t" style="left:1356px;top:1018.5px;width:133px;text-align:right">0.00</div>
<div class="a" style="left:1493.5px;top:1012px;width:1.2px;height:28px;background:#e4e4e4"></div>
<div class="t" style="left:1495px;top:1018.5px;width:133.29999999999995px;text-align:right">0.00</div>
<div class="a" style="left:1632.8px;top:1012px;width:1.2px;height:28px;background:#e4e4e4"></div>
<div class="t" style="left:1634.3px;top:1018.5px;width:132.20000000000005px;text-align:right">0.00</div>
<div class="a" style="left:1771.0px;top:1012px;width:1.2px;height:28px;background:#e4e4e4"></div>
<div class="t" style="left:1772.5px;top:1018.5px;width:189.5px;text-align:right">-1.87</div>
<svg class="a" style="left:1971px;top:1020px" width="14" height="14" viewBox="0 0 14 14"><path d="M3 3 L11 11 M11 3 L3 11" stroke="#606060" stroke-width="2.2"/></svg>
<svg class="a" style="left:26px;top:1016px" width="22" height="22" viewBox="0 0 22 22"><path d="M1.5 1.5 H11 L15 5.5 V19.5 H1.5 Z" fill="#fafafa" stroke="#707070" stroke-width="1.1"/><path d="M11 1.5 V5.5 H15" fill="none" stroke="#707070" stroke-width="1"/><circle cx="14.5" cy="16" r="4.6" fill="#e84818" stroke="#b03010" stroke-width="0.8"/><circle cx="13.5" cy="14.8" r="1.5" fill="#ff9a70"/></svg>
<div class="a" style="left:22px;top:1040px;width:1972px;height:28px;background:#cbc9ce"></div>
<svg class="a" style="left:26px;top:1043px" width="20" height="22" viewBox="0 0 20 22"><rect x="1.2" y="1.2" width="15.5" height="17.5" fill="#f6f6f6" stroke="#808080" stroke-width="1.1"/><path d="M7 5.5 H11 V10 H14 L9 15.5 L4 10 H7 Z" fill="#e04010"/></svg>
<div class="t" style="left:53px;top:1046.5px;font-weight:bold;font-size:15.3px;letter-spacing:0.62px">Баланс: 1 086.62 USC&nbsp; Средства: 1 084.75&nbsp; Маржа: 7.82&nbsp; Свободная маржа: 1 076.93&nbsp; Уровень: 13873.97%</div>
<div class="t" style="left:1700px;top:1046.5px;width:1261px;font-weight:bold;font-size:15.3px;width:261px;text-align:right;left:1700px">-1.87</div>
<div class="a" style="left:22px;top:1123.5px;width:1974px;height:1.5px;background:#000"></div>
<div class="a" style="left:25px;top:1124px;width:93px;height:25.5px;background:#fff;border-left:1.5px solid #000;border-right:1.5px solid #000;border-bottom:2px solid #000"></div>
<div class="t" style="left:38px;top:1129px">Торговля</div>
<div class="t" style="left:131px;top:1129px;color:#404040">Активы</div>
<div class="t" style="left:212.5px;top:1129px;color:#404040">История Счета</div>
<div class="t" style="left:346px;top:1129px;color:#404040">Новости</div>
<div class="t" style="left:449px;top:1129px;color:#404040">Алерты</div>
<div class="t" style="left:531px;top:1129px;color:#404040">Почта</div>
<div class="t" style="left:612px;top:1129px;color:#404040">Маркет</div>
<div class="t" style="left:709px;top:1129px;color:#404040">Сигналы</div>
<div class="t" style="left:797px;top:1129px;color:#404040">Библиотека</div>
<div class="t" style="left:909px;top:1129px;color:#404040">Эксперты</div>
<div class="t" style="left:1006px;top:1129px;color:#404040">Журнал</div>
<div class="a" style="left:200.8px;top:1128px;width:1.5px;height:18px;background:#404040"></div>
<div class="a" style="left:334px;top:1128px;width:1.5px;height:18px;background:#404040"></div>
<div class="a" style="left:436.8px;top:1128px;width:1.5px;height:18px;background:#404040"></div>
<div class="a" style="left:519px;top:1128px;width:1.5px;height:18px;background:#404040"></div>
<div class="a" style="left:598.5px;top:1128px;width:1.5px;height:18px;background:#404040"></div>
<div class="a" style="left:696px;top:1128px;width:1.5px;height:18px;background:#404040"></div>
<div class="a" style="left:784.5px;top:1128px;width:1.5px;height:18px;background:#404040"></div>
<div class="a" style="left:896px;top:1128px;width:1.5px;height:18px;background:#404040"></div>
<div class="a" style="left:993.5px;top:1128px;width:1.5px;height:18px;background:#404040"></div>
<div class="a" style="left:1075px;top:1128px;width:1.5px;height:18px;background:#404040"></div>
<div class="t" style="left:409px;top:1135px;color:#e02020;font-size:11px;font-weight:bold">99</div>
<div class="t" style="left:578px;top:1135px;color:#e02020;font-size:11px;font-weight:bold">7</div>
<div class="t" style="left:668px;top:1135px;color:#e02020;font-size:11px;font-weight:bold">54</div>
<div class="a" style="left:1994.5px;top:983px;width:1.5px;height:168px;background:#fff"></div>
<div class="a" style="left:0;top:1151px;width:2000px;height:1.5px;background:#fff"></div>
<div class="a" style="left:0;top:1156px;width:2000px;height:1.5px;background:#fff"></div>
<div class="t" style="left:3px;top:1167.5px">Для вызова справки нажмите F1</div>
<div class="a" style="left:1055.3px;top:1162px;width:1.4px;height:26px;background:#a0a0a0"></div><div class="a" style="left:1056.7px;top:1162px;width:1.2px;height:26px;background:#fff"></div>
<div class="a" style="left:1206.3px;top:1162px;width:1.4px;height:26px;background:#a0a0a0"></div><div class="a" style="left:1207.7px;top:1162px;width:1.2px;height:26px;background:#fff"></div>
<div class="a" style="left:1347.3px;top:1162px;width:1.4px;height:26px;background:#a0a0a0"></div><div class="a" style="left:1348.7px;top:1162px;width:1.2px;height:26px;background:#fff"></div>
<div class="a" style="left:1447.0px;top:1162px;width:1.4px;height:26px;background:#a0a0a0"></div><div class="a" style="left:1448.4px;top:1162px;width:1.2px;height:26px;background:#fff"></div>
<div class="a" style="left:1546.1px;top:1162px;width:1.4px;height:26px;background:#a0a0a0"></div><div class="a" style="left:1547.5px;top:1162px;width:1.2px;height:26px;background:#fff"></div>
<div class="a" style="left:1641.6px;top:1162px;width:1.4px;height:26px;background:#a0a0a0"></div><div class="a" style="left:1643.0px;top:1162px;width:1.2px;height:26px;background:#fff"></div>
<div class="a" style="left:1740.3px;top:1162px;width:1.4px;height:26px;background:#a0a0a0"></div><div class="a" style="left:1741.7px;top:1162px;width:1.2px;height:26px;background:#fff"></div>
<div class="a" style="left:1831.8px;top:1162px;width:1.4px;height:26px;background:#a0a0a0"></div><div class="a" style="left:1833.2px;top:1162px;width:1.2px;height:26px;background:#fff"></div>
<div class="t" style="left:1063px;top:1167.5px">Default</div>
<div class="t" style="left:1215px;top:1167.5px">2017.05.29 00:00</div>
<div class="t" style="left:1355px;top:1167.5px">O: 124.31</div>
<div class="t" style="left:1455px;top:1167.5px">H: 124.63</div>
<div class="t" style="left:1553px;top:1167.5px">L: 124.18</div>
<div class="t" style="left:1650px;top:1167.5px">C: 124.20</div>
<div class="t" style="left:1748px;top:1167.5px">V: 12506</div>
<div class="t" style="left:1878px;top:1167.5px">237047/254 kb</div>
<svg class="a" style="left:1840px;top:1160px" width="36" height="28" viewBox="0 0 36 28"><rect x="0.5" y="5.5" width="2.8" height="13.5" fill="#6a9a20"/><rect x="0.5" y="19.0" width="2.8" height="4.5" fill="#103a5a"/><rect x="4.099999999999909" y="5.5" width="2.8" height="12.0" fill="#6a9a20"/><rect x="4.099999999999909" y="17.5" width="2.8" height="6.0" fill="#103a5a"/><rect x="7.7000000000000455" y="5.5" width="2.8" height="10.5" fill="#6a9a20"/><rect x="7.7000000000000455" y="16.0" width="2.8" height="7.5" fill="#103a5a"/><rect x="11.299999999999955" y="5.5" width="2.8" height="9.0" fill="#6a9a20"/><rect x="11.299999999999955" y="14.5" width="2.8" height="9.0" fill="#103a5a"/><rect x="14.900000000000091" y="5.5" width="2.8" height="7.5" fill="#6a9a20"/><rect x="14.900000000000091" y="13.0" width="2.8" height="10.5" fill="#103a5a"/><rect x="18.5" y="5.5" width="2.8" height="6.0" fill="#6a9a20"/><rect x="18.5" y="11.5" width="2.8" height="12.0" fill="#103a5a"/><rect x="22.09999999999991" y="5.5" width="2.8" height="4.5" fill="#6a9a20"/><rect x="22.09999999999991" y="10.0" width="2.8" height="13.5" fill="#103a5a"/><rect x="25.700000000000045" y="5.5" width="2.8" height="3.0" fill="#6a9a20"/><rect x="25.700000000000045" y="8.5" width="2.8" height="15.0" fill="#103a5a"/><rect x="29.299999999999955" y="5.5" width="2.8" height="1.5" fill="#6a9a20"/><rect x="29.299999999999955" y="7.0" width="2.8" height="16.5" fill="#103a5a"/></svg>
<div class="a" style="left:0;top:1190px;width:2000px;height:60px;background:#d4d0c8"></div>
<div class="a" style="left:0;top:1190.5px;width:2000px;height:1.5px;background:#fff"></div>
<div class="a" style="left:3px;top:1194.5px;width:70px;height:52.5px;background:#d4d0c8;border-top:1.4px solid #fff;border-left:1.4px solid #fff;border-right:1.4px solid #404040;border-bottom:1.4px solid #404040;box-shadow:inset -1.4px -1.4px 0 #808080"></div>
<svg class="a" style="left:5px;top:1207px" width="24" height="24" viewBox="0 0 24 24">
<path d="M2 4 Q6 1 11 4 L10 11 Q6 9 1 11 Z" fill="#f05a28"/>
<path d="M12 4.5 Q17 7 22 3.5 L21 10.5 Q16 13 11 11 Z" fill="#6ab82a"/>
<path d="M1 12 Q6 10 10 12.5 L9 19.5 Q5 17 0 19 Z" fill="#2a8ad8"/>
<path d="M11 12.5 Q16 14 21 11.5 L20 18.5 Q15 21 10 19 Z" fill="#f8c020"/></svg>
<div class="t" style="left:30px;top:1213px;font-weight:bold;font-size:15px">Пуск</div>
<div class="a" style="left:83.5px;top:1197px;width:1.5px;height:47px;background:#808080"></div><div class="a" style="left:85px;top:1197px;width:1.5px;height:47px;background:#fff"></div>
<svg class="a" style="left:108px;top:1200px" width="48" height="46" viewBox="0 0 48 46">
<path d="M3 8 H14 L16 5 H40 V38 H3 Z" fill="#f2d27a" stroke="#c8a050" stroke-width="1"/>
<rect x="5" y="3" width="14" height="6" fill="#fff" stroke="#c8c8c8" stroke-width="0.6"/><rect x="6" y="3.5" width="3" height="3" fill="#20b030"/>
<rect x="17" y="6" width="14" height="6" fill="#fff" stroke="#c8c8c8" stroke-width="0.6"/><rect x="18" y="7" width="3" height="3" fill="#e04020"/>
<rect x="27" y="9" width="13" height="6" fill="#fff" stroke="#c8c8c8" stroke-width="0.6"/><rect x="28" y="10" width="3" height="3" fill="#3090e0"/>
<path d="M2 14 H44 V38 H2 Z" fill="#f8e2a0" stroke="#c8a050" stroke-width="1"/>
<path d="M10 42 V24 Q10 20 14 20 H33 Q37 20 37 24 V42 H31 V29 H16 V42 Z" fill="#8ccaf0" stroke="#4aa0d8" stroke-width="1.2"/></svg>
<div class="a" style="left:168px;top:1194.5px;width:65px;height:52px;background:#d4d0c8;border-top:1.4px solid #fff;border-left:1.4px solid #fff;border-right:1.4px solid #404040;border-bottom:1.4px solid #404040;box-shadow:inset -1.4px -1.4px 0 #808080"></div>
<svg class="a" style="left:179px;top:1199px" width="45" height="44" viewBox="0 0 45 44"><rect x="0" y="0" width="45" height="44" rx="5" fill="#000"/><path d="M7 16.0 L12 11.0 Q22 4.0 32 11.0 L37 16.0" stroke="#d84a1e" stroke-width="2" fill="none" stroke-dasharray="2,1"/><path d="M7 18.9 L12 13.9 Q22 6.9 32 13.9 L37 18.9" stroke="#d8802a" stroke-width="2" fill="none" stroke-dasharray="2,1"/><path d="M7 21.8 L12 16.8 Q22 9.8 32 16.8 L37 21.8" stroke="#b8a030" stroke-width="2" fill="none" stroke-dasharray="2,1"/><path d="M7 24.7 L12 19.7 Q22 12.7 32 19.7 L37 24.7" stroke="#90b030" stroke-width="2" fill="none" stroke-dasharray="2,1"/><path d="M7 27.6 L12 22.6 Q22 15.600000000000001 32 22.6 L37 27.6" stroke="#58a830" stroke-width="2" fill="none" stroke-dasharray="2,1"/><text x="22.5" y="37.5" text-anchor="middle" style="font-size:13px;letter-spacing:-0.3px;font-family:'Liberation Sans'" fill="#e0e0e0">alpari</text></svg>
<div class="a" style="left:238px;top:1194.5px;width:65px;height:52px;background:#d4d0c8;border-top:1.4px solid #fff;border-left:1.4px solid #fff;border-right:1.4px solid #404040;border-bottom:1.4px solid #404040;box-shadow:inset -1.4px -1.4px 0 #808080"></div>
<svg class="a" style="left:249px;top:1199px" width="45" height="44" viewBox="0 0 45 44"><rect x="0" y="0" width="45" height="44" rx="5" fill="#000"/><path d="M7 16.0 L12 11.0 Q22 4.0 32 11.0 L37 16.0" stroke="#d84a1e" stroke-width="2" fill="none" stroke-dasharray="2,1"/><path d="M7 18.9 L12 13.9 Q22 6.9 32 13.9 L37 18.9" stroke="#d8802a" stroke-width="2" fill="none" stroke-dasharray="2,1"/><path d="M7 21.8 L12 16.8 Q22 9.8 32 16.8 L37 21.8" stroke="#b8a030" stroke-width="2" fill="none" stroke-dasharray="2,1"/><path d="M7 24.7 L12 19.7 Q22 12.7 32 19.7 L37 24.7" stroke="#90b030" stroke-width="2" fill="none" stroke-dasharray="2,1"/><path d="M7 27.6 L12 22.6 Q22 15.600000000000001 32 22.6 L37 27.6" stroke="#58a830" stroke-width="2" fill="none" stroke-dasharray="2,1"/><text x="22.5" y="37.5" text-anchor="middle" style="font-size:13px;letter-spacing:-0.3px;font-family:'Liberation Sans'" fill="#e0e0e0">alpari</text></svg>
<div class="a" style="left:307px;top:1194.5px;width:65px;height:52px;background:#d4d0c8;border-top:1.4px solid #fff;border-left:1.4px solid #fff;border-right:1.4px solid #404040;border-bottom:1.4px solid #404040;box-shadow:inset -1.4px -1.4px 0 #808080"></div>
<svg class="a" style="left:318px;top:1199px" width="45" height="44" viewBox="0 0 45 44"><rect x="0" y="0" width="45" height="44" rx="5" fill="#000"/><path d="M7 16.0 L12 11.0 Q22 4.0 32 11.0 L37 16.0" stroke="#d84a1e" stroke-width="2" fill="none" stroke-dasharray="2,1"/><path d="M7 18.9 L12 13.9 Q22 6.9 32 13.9 L37 18.9" stroke="#d8802a" stroke-width="2" fill="none" stroke-dasharray="2,1"/><path d="M7 21.8 L12 16.8 Q22 9.8 32 16.8 L37 21.8" stroke="#b8a030" stroke-width="2" fill="none" stroke-dasharray="2,1"/><path d="M7 24.7 L12 19.7 Q22 12.7 32 19.7 L37 24.7" stroke="#90b030" stroke-width="2" fill="none" stroke-dasharray="2,1"/><path d="M7 27.6 L12 22.6 Q22 15.600000000000001 32 22.6 L37 27.6" stroke="#58a830" stroke-width="2" fill="none" stroke-dasharray="2,1"/><text x="22.5" y="37.5" text-anchor="middle" style="font-size:13px;letter-spacing:-0.3px;font-family:'Liberation Sans'" fill="#e0e0e0">alpari</text></svg>
<div class="a" style="left:377px;top:1194.5px;width:65px;height:52px;background:#d4d0c8;border-top:1.4px solid #fff;border-left:1.4px solid #fff;border-right:1.4px solid #404040;border-bottom:1.4px solid #404040;box-shadow:inset -1.4px -1.4px 0 #808080"></div>
<svg class="a" style="left:388px;top:1199px" width="45" height="44" viewBox="0 0 45 44"><rect x="0" y="0" width="45" height="44" rx="5" fill="#000"/><path d="M7 16.0 L12 11.0 Q22 4.0 32 11.0 L37 16.0" stroke="#d84a1e" stroke-width="2" fill="none" stroke-dasharray="2,1"/><path d="M7 18.9 L12 13.9 Q22 6.9 32 13.9 L37 18.9" stroke="#d8802a" stroke-width="2" fill="none" stroke-dasharray="2,1"/><path d="M7 21.8 L12 16.8 Q22 9.8 32 16.8 L37 21.8" stroke="#b8a030" stroke-width="2" fill="none" stroke-dasharray="2,1"/><path d="M7 24.7 L12 19.7 Q22 12.7 32 19.7 L37 24.7" stroke="#90b030" stroke-width="2" fill="none" stroke-dasharray="2,1"/><path d="M7 27.6 L12 22.6 Q22 15.600000000000001 32 22.6 L37 27.6" stroke="#58a830" stroke-width="2" fill="none" stroke-dasharray="2,1"/><text x="22.5" y="37.5" text-anchor="middle" style="font-size:13px;letter-spacing:-0.3px;font-family:'Liberation Sans'" fill="#e0e0e0">alpari</text></svg>
<div class="a" style="left:446px;top:1194.5px;width:65px;height:52px;background:#fff;border-top:2px solid #404040;border-left:2px solid #404040;border-right:1.4px solid #e8e8e8;border-bottom:1.4px solid #e8e8e8"></div>
<svg class="a" style="left:457px;top:1199px" width="45" height="44" viewBox="0 0 45 44"><rect x="0" y="0" width="45" height="44" rx="5" fill="#000"/><path d="M7 16.0 L12 11.0 Q22 4.0 32 11.0 L37 16.0" stroke="#d84a1e" stroke-width="2" fill="none" stroke-dasharray="2,1"/><path d="M7 18.9 L12 13.9 Q22 6.9 32 13.9 L37 18.9" stroke="#d8802a" stroke-width="2" fill="none" stroke-dasharray="2,1"/><path d="M7 21.8 L12 16.8 Q22 9.8 32 16.8 L37 21.8" stroke="#b8a030" stroke-width="2" fill="none" stroke-dasharray="2,1"/><path d="M7 24.7 L12 19.7 Q22 12.7 32 19.7 L37 24.7" stroke="#90b030" stroke-width="2" fill="none" stroke-dasharray="2,1"/><path d="M7 27.6 L12 22.6 Q22 15.600000000000001 32 22.6 L37 27.6" stroke="#58a830" stroke-width="2" fill="none" stroke-dasharray="2,1"/><text x="22.5" y="37.5" text-anchor="middle" style="font-size:13px;letter-spacing:-0.3px;font-family:'Liberation Sans'" fill="#e0e0e0">alpari</text></svg>
<div class="a" style="left:1785px;top:1197px;width:1.5px;height:47px;background:#808080"></div><div class="a" style="left:1786.5px;top:1197px;width:1.5px;height:47px;background:#fff"></div>
<div class="t" style="left:1800px;top:1210px;font-size:15.3px">EN</div>
<div class="a" style="left:1828px;top:1203px;width:1.2px;height:30px;background:#808080"></div><div class="a" style="left:1829.2px;top:1203px;width:1.2px;height:30px;background:#fff"></div>
<div class="a" style="left:1833px;top:1195px;width:163px;height:51.5px;border-top:1.4px solid #808080;border-left:1.4px solid #808080;border-right:1.4px solid #fff;border-bottom:1.4px solid #fff"></div>
<svg class="a" style="left:1842px;top:1209px" width="24" height="24" viewBox="0 0 24 24">
<path d="M2 8 H6 L12 3 V21 L6 16 H2 Z" fill="#f4f4f4" stroke="#909090" stroke-width="1"/>
<path d="M15 8 Q17.5 12 15 16 M18 6 Q21.5 12 18 18" stroke="#b0b0b0" stroke-width="1.2" fill="none"/></svg>
<div class="t" style="left:1909px;top:1201.5px;font-size:15.3px">7:52</div>
<div class="t" style="left:1886px;top:1224px;font-size:15.3px">19.07.2017</div>
<svg class="a" style="left:1972px;top:1213px" width="23" height="18" viewBox="0 0 23 18"><rect x="1" y="1" width="20" height="15" fill="#3a7ad8" stroke="#2050a0" stroke-width="1"/><rect x="2" y="12" width="18" height="3" fill="#202020"/></svg>
</body></html>
